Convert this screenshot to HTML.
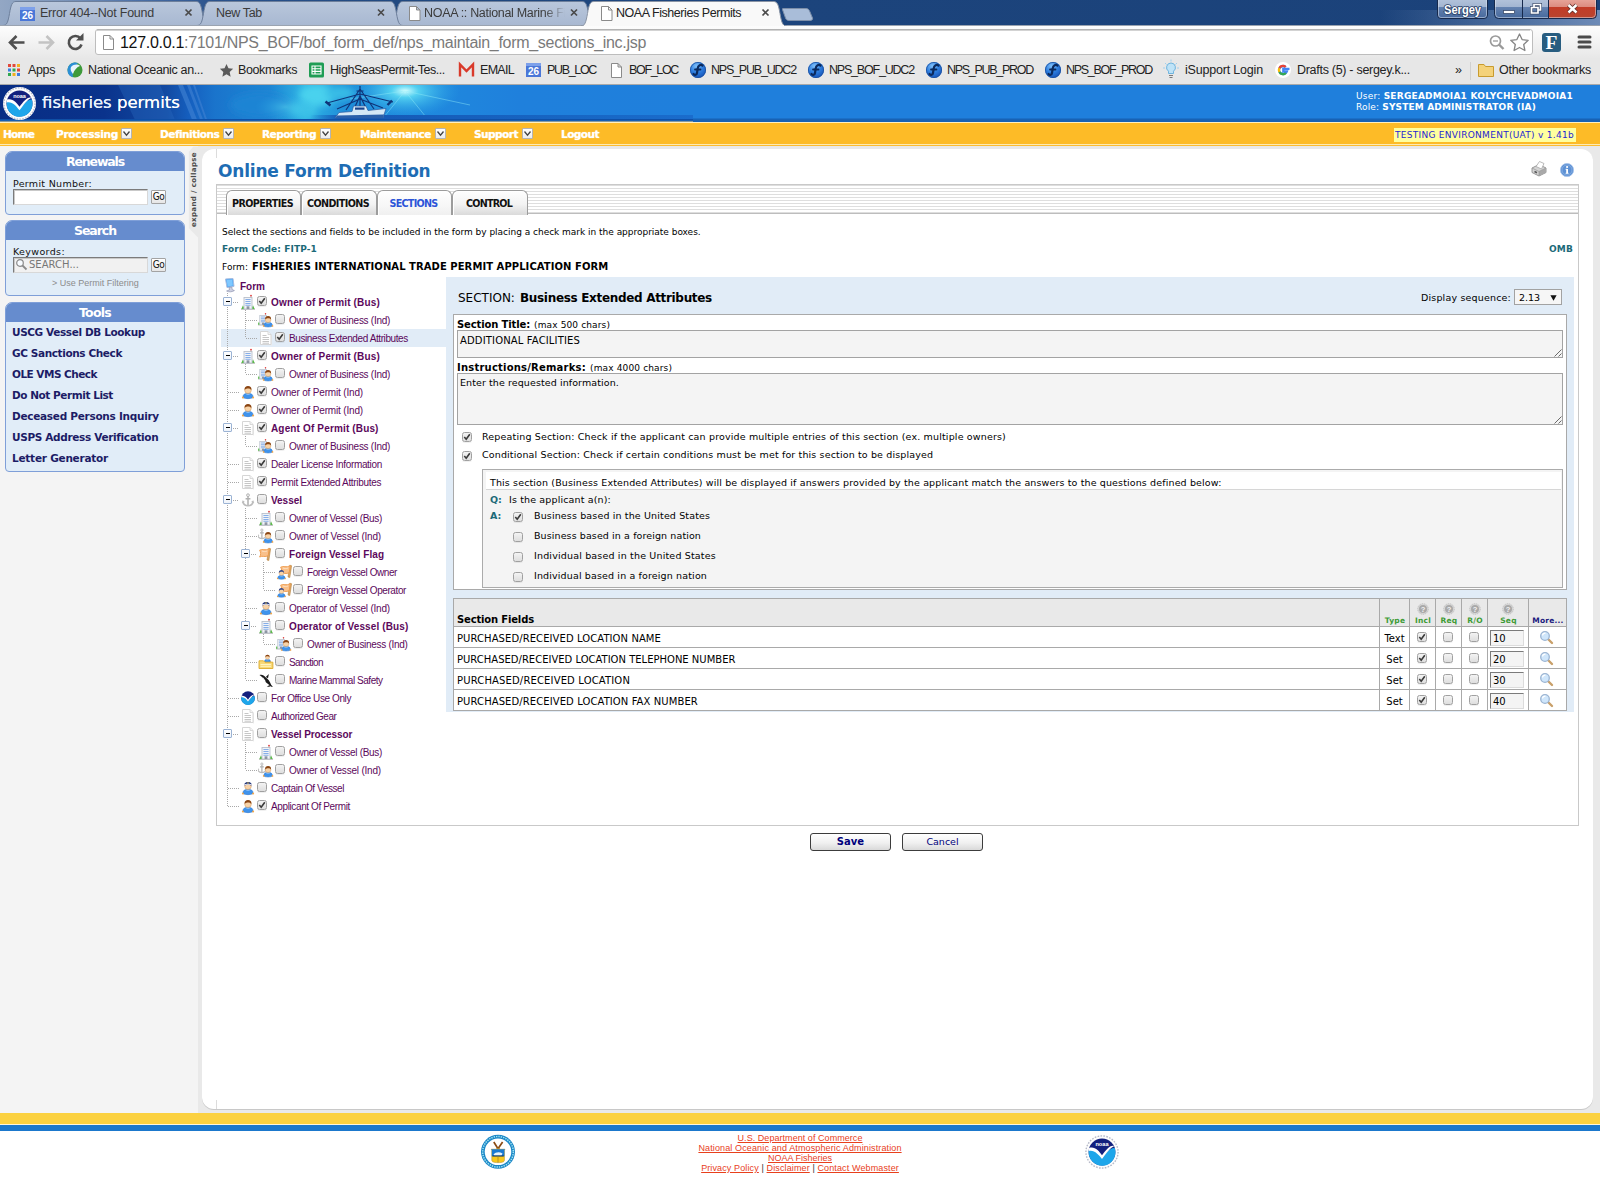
<!DOCTYPE html>
<html lang="en"><head>
<meta charset="utf-8">
<title>NOAA Fisheries Permits</title>
<style>
*{box-sizing:border-box;margin:0;padding:0}
html,body{width:1600px;height:1200px;overflow:hidden;background:#fff}
body{position:relative;font-family:"DejaVu Sans","Liberation Sans",sans-serif;font-size:10px;color:#000}
.abs{position:absolute}
a{text-decoration:none;color:inherit}
/* ---------- chrome frame ---------- */
#titlebar{left:0;top:0;width:1600px;height:26px;background:linear-gradient(90deg,#93a7c4 0px,#7d96bb 60px,#4a6fa6 140px,#2a528c 215px,#20487f 420px,#1c447c 780px,#1b427a 1600px)}
#toolbar{left:0;top:25px;width:1600px;height:34px;background:linear-gradient(#fdfdfd,#f0f0f0 60%,#e7e7e7);border-top:1px solid #b9bec6}
#bookbar{left:0;top:58px;width:1600px;height:27px;background:#e7e7e7;border-bottom:1px solid #a9a9a9}
.ctab{top:1px;height:25px;font-family:"Liberation Sans",sans-serif;font-size:12.5px;color:#3b3b3b;white-space:nowrap;overflow:hidden}
.ctab svg{position:absolute;left:0;top:0}
.ctab span{position:absolute;top:5px}
.bm{top:62px;font-family:"Liberation Sans",sans-serif;font-size:12.5px;color:#222;white-space:nowrap;line-height:16px}
#url{left:120px;top:33px;font-family:"Liberation Sans",sans-serif;font-size:16px;color:#7a7a7a;white-space:nowrap;line-height:20px;letter-spacing:-0.15px}
#url b{font-weight:normal;color:#111}
/* ---------- site header ---------- */
#banner{left:0;top:85px;width:1600px;height:37px;background:#1f7fdc;overflow:hidden}
#menubar{left:0;top:121.500px;width:1600px;height:24.500px;background:linear-gradient(#fff0c0 0,#fff0c0 1px,#fdbb27 1px,#fdbb27 21.500px,#fdebb4 21.500px,#fdebb4 23px,#fcbc30 23px,#fcbc30 24.500px)}
.mi{top:127.500px;font-weight:bold;font-size:10.5px;color:#fff;white-space:nowrap;line-height:13px;text-shadow:0 0 1px #fff6dc}
.mbox{top:128px;width:11px;height:11px;border:1px solid #b4b4b4;background:linear-gradient(#fff,#ececec);border-radius:1px}
/* ---------- page ---------- */
#leftcol{left:0;top:146px;width:198px;height:967px;background:#f4f4f4}
#rightcol{left:198px;top:146px;width:1402px;height:967px;background:#e9e9e9}
#panel{left:202px;top:149px;width:1391px;height:960px;background:#fff;border-radius:12px;box-shadow:0 1px 0 #c8c8c8}
.sb{left:5px;width:180px;background:#e1edf8;border:1px solid #7f9fd8;border-radius:7px 7px 4px 4px;overflow:hidden}
.sb h3{height:19px;background:#668cce;color:#fff;font-size:12.5px;line-height:19px;text-align:center;font-weight:bold}
.tool{left:12px;font-weight:bold;font-size:10.5px;color:#1c1c66;white-space:nowrap;line-height:13px}

.sbl{left:13px;font-size:9.5px;line-height:12px;white-space:nowrap;color:#111}
.inp{left:13px;width:135px;height:16px;border:1px solid;border-color:#7b7b7b #d8d8d8 #d8d8d8 #7b7b7b;background:#fff;box-shadow:inset 1px 1px 0 #c9c9c9}
.go{left:151px;width:15px;height:13.500px;border:1px solid #a3a3a3;border-radius:1px;background:linear-gradient(#fff,#e6e6e6);font-family:"DejaVu Sans Condensed","Liberation Sans",sans-serif;font-size:10px;line-height:11.500px;text-align:center;color:#111;letter-spacing:-.4px}
/*MAINCSS*/
.t9{font-size:9px;line-height:11px;white-space:nowrap;margin-top:1px}
.t10{font-size:10px;line-height:12px;white-space:nowrap;margin-top:1px}
.teal{color:#1c6a78;font-weight:bold}
.tl{font-family:"Liberation Sans",sans-serif;font-size:10px;line-height:12px;color:#5c085c;white-space:nowrap}
.tl b{font-weight:bold}
.cb{width:10px;height:10px;border:1px solid #a0a0a0;border-radius:2.5px;background:linear-gradient(#f3f3f3,#dedede);box-shadow:0 1px 0 rgba(0,0,0,.06)}
.cb svg{display:block}
.exp{width:9px;height:9px;border:1px solid #9bb3d4;background:#fff;border-radius:1px}
.exp{background:linear-gradient(#fff,#eef3fa)}
.exp i{position:absolute;left:1.500px;top:2.800px;width:4px;height:1.400px;background:#000}
.dh{height:1px;background:repeating-linear-gradient(90deg,#a8a8a8 0,#a8a8a8 1px,transparent 1px,transparent 2px)}
.dv{width:1px;background:repeating-linear-gradient(#a8a8a8 0,#a8a8a8 1px,transparent 1px,transparent 2px)}
.ta{background:#f4f4f4;border:1px solid #a3a3a3}
.tab{top:190px;height:25px;border:1px solid #9c9c9c;border-bottom:0;border-radius:6px 6px 0 0;background:linear-gradient(#fefefe 0,#f3f3f3 55%,#dadada 100%);font-size:9.600px;font-weight:bold;line-height:25px;text-align:center;color:#111;padding-right:2px;white-space:nowrap;box-shadow:inset 1px 1px 0 #fff}
.hd{font-size:7.500px;font-weight:bold;color:#3d9b35;line-height:10px;letter-spacing:.2px;text-align:center;white-space:nowrap}
.btn{top:833px;width:81px;height:18px;border:1px solid #3c3c3c;border-radius:3px;background:linear-gradient(#fff,#f0f0f0 55%,#d9d9d9);text-align:center;line-height:16px;font-size:10px;color:#00007c}
.fl{left:0;width:1600px;text-align:center;font-family:"Liberation Sans",sans-serif;font-size:9px;line-height:10px;color:#e8401c;white-space:nowrap}
.fl u{text-decoration:underline}
/*/MAINCSS*/
</style>
</head>
<body>
<!-- CHROME -->
<div id="titlebar" class="abs"></div>
<div id="toolbar" class="abs"></div>
<div id="bookbar" class="abs"></div>

<!-- tabs -->
<svg class="abs" style="left:0;top:0" width="1600" height="26" viewBox="0 0 1600 26">
  <defs>
    <linearGradient id="tg" x1="0" y1="0" x2="0" y2="1"><stop offset="0" stop-color="#b9c7dc"></stop><stop offset="1" stop-color="#a8b8d1"></stop></linearGradient>
  </defs>
  <path d="M3 25.5 C7 25.5 8 22 9.5 13.5 C11 5 12 1.5 16 1.5 H196 C200 1.5 201 5 202.5 13.5 C204 22 205 25.5 209 25.5 Z" fill="url(#tg)" stroke="#6d7f9b" stroke-width="1"></path>
  <path d="M390 25.5 C394 25.5 395 22 396.5 13.5 C398 5 399 1.5 403 1.5 H582 C586 1.5 587 5 588.5 13.5 C590 22 591 25.5 595 25.5 Z" fill="url(#tg)" stroke="#6d7f9b" stroke-width="1"></path>
  <path d="M197 25.5 C201 25.5 202 22 203.5 13.5 C205 5 206 1.5 210 1.5 H390 C394 1.5 395 5 396.5 13.5 C398 22 399 25.5 403 25.5 Z" fill="url(#tg)" stroke="#6d7f9b" stroke-width="1"></path>
  <path d="M0 25.5 H1600" stroke="#9aa3b0" stroke-width="1"></path>
  <path d="M581 26 C585 26 586 22 587.5 13.5 C589 5 590 1.5 594 1.5 H773.5 C777.5 1.5 778.5 5 780.0 13.5 C781.5 22 782.5 26 786.5 26 Z" fill="#f9f9f9" stroke="#8a94a4" stroke-width="1"></path>
  <path d="M584 25.700 H784" stroke="#f9f9f9" stroke-width="1.600"></path>
  <path d="M783 8.5 H806 C808 8.5 809 9.5 810 12 L812.500 18 C813 19.500 812 20.500 810 20.500 H789 C787 20.500 786 19.500 785.500 18 L783 11 C782.500 9.500 782 8.500 783 8.500 Z" fill="#a9bdd9" stroke="#7d8fa9" stroke-width="1"></path>
  <!-- favicons -->
  <rect x="20" y="7" width="15" height="14" fill="#4a77d8"></rect><rect x="20" y="7" width="15" height="3" fill="#7da0ea"></rect>
  <text x="27.5" y="19" font-family="Liberation Sans, sans-serif" font-size="10" font-weight="bold" fill="#fff" text-anchor="middle">26</text>
  <path d="M409.500 6.500 h7 l3.500 3.500 v10.500 h-10.500 z M416.500 6.500 v3.500 h3.500" fill="#fff" stroke="#8a8a8a" stroke-width="1"></path>
  <path d="M601.500 6.500 h7 l3.500 3.500 v10.500 h-10.500 z M608.500 6.500 v3.500 h3.500" fill="#fff" stroke="#8a8a8a" stroke-width="1"></path>
  <!-- close x -->
  <g stroke="#4a4a4a" stroke-width="1.7" stroke-linecap="butt">
    <path d="M185.500 9.500 l6 6 m0 -6 l-6 6"></path><path d="M378 9.500 l6 6 m0 -6 l-6 6"></path><path d="M571 9.500 l6 6 m0 -6 l-6 6"></path><path d="M762.500 9.500 l6 6 m0 -6 l-6 6"></path>
  </g>
  <!-- user + window buttons -->
  <defs>
    <linearGradient id="wb" x1="0" y1="0" x2="0" y2="1"><stop offset="0" stop-color="#b9c8de"></stop><stop offset=".48" stop-color="#a3b6d2"></stop><stop offset=".5" stop-color="#6482b0"></stop><stop offset="1" stop-color="#46689c"></stop></linearGradient>
    <linearGradient id="wc" x1="0" y1="0" x2="0" y2="1"><stop offset="0" stop-color="#ecb0a6"></stop><stop offset=".48" stop-color="#dc8c80"></stop><stop offset=".5" stop-color="#c23c28"></stop><stop offset="1" stop-color="#b8442e"></stop></linearGradient>
    <linearGradient id="glow" x1="0" y1="0" x2="1" y2="0"><stop offset="0" stop-color="#7c98c2" stop-opacity="0"></stop><stop offset="1" stop-color="#7c98c2" stop-opacity=".85"></stop></linearGradient>
  </defs>
  <rect x="1380" y="10" width="220" height="15" fill="url(#glow)"></rect>
  <rect x="1437.500" y="-4" width="50" height="22.500" rx="3.500" fill="url(#wb)" stroke="#16294c"></rect>
  <rect x="1438.500" y="-3" width="48" height="20.500" rx="2.500" fill="none" stroke="#d4deee" stroke-width=".7" opacity=".8"></rect>
  <text x="1462.500" y="13.500" font-family="Liberation Sans, sans-serif" font-size="12" font-weight="bold" fill="#fff" stroke="#2a3f66" stroke-width="1.600" paint-order="stroke" text-anchor="middle" textLength="37" lengthAdjust="spacingAndGlyphs">Sergey</text>
  <path d="M1494.500 -4 H1548.500 V18.500 H1498.500 Q1494.500 18.500 1494.500 14.500Z" fill="url(#wb)" stroke="#16294c"></path>
  <path d="M1548.500 -4 H1596.500 V14.500 Q1596.500 18.500 1592.500 18.500 H1548.500 Z" fill="url(#wc)" stroke="#16294c"></path>
  <path d="M1495.500 -3 H1595.500 V14 Q1595.500 17.500 1592 17.500 H1499 Q1495.500 17.500 1495.500 14Z" fill="none" stroke="#e4eaf4" stroke-width=".7" opacity=".7"></path>
  <path d="M1522.500 0 V18 M1548.500 0 V18" stroke="#16294c"></path>
  <rect x="1503.500" y="10.500" width="11" height="3" fill="#fff" stroke="#3c4d6c" stroke-width=".8"></rect>
  <path d="M1531.500 7.500 h6.500 v5.500 h-6.500 z M1534 7 v-2.500 h6.500 v5.500 h-2.300" fill="none" stroke="#3c4d6c" stroke-width="3"></path>
  <path d="M1531.500 7.500 h6.500 v5.500 h-6.500 z M1534 7 v-2.500 h6.500 v5.500 h-2.300" fill="none" stroke="#fff" stroke-width="1.700"></path>
  <path d="M1568.500 5 l8 7.500 m0 -7.500 l-8 7.500" stroke="#5a2a24" stroke-width="4"></path>
  <path d="M1568.500 5 l8 7.500 m0 -7.500 l-8 7.500" stroke="#fff" stroke-width="2.500"></path>
</svg>
<div class="abs ctab" style="left:40px;width:140px"><span style="letter-spacing: -0.24px;">Error 404--Not Found</span></div>
<div class="abs ctab" style="left:216px;width:150px"><span style="letter-spacing: -0.35px;">New Tab</span></div>
<div class="abs ctab" style="left:424px;width:143px;-webkit-mask-image:linear-gradient(90deg,#000 120px,transparent 141px)"><span style="letter-spacing: -0.31px;">NOAA :: National Marine Fi</span></div>
<div class="abs ctab" style="left:616px;width:140px;color:#222"><span style="letter-spacing: -0.44px;">NOAA Fisheries Permits</span></div>
<!-- toolbar -->
<svg class="abs" style="left:0;top:26px" width="1600" height="33" viewBox="0 26 1600 33">
  <rect x="95.500" y="29.500" width="1437" height="25" rx="2.500" fill="#fff" stroke="#bdbdbd"></rect>
  <path d="M97 30 H1530" stroke="#a8a8a8" stroke-width="1"></path>
  <g fill="none" stroke="#4f4f4f" stroke-width="2.600" stroke-linejoin="miter">
    <path d="M24.500 42.500 H10.500 M16.500 36 L10 42.500 L16.500 49"></path>
  </g>
  <g fill="none" stroke="#c3c3c3" stroke-width="2.600">
    <path d="M38.500 42.500 H52.500 M46.500 36 L53 42.500 L46.500 49"></path>
  </g>
  <path d="M80.500 38.500 A6.500 6.500 0 1 0 81.500 44.500" fill="none" stroke="#4f4f4f" stroke-width="2.600"></path>
  <path d="M76 40.500 h7.500 v-7.500 z" fill="#4f4f4f"></path>
  <path d="M103.500 35.500 h6.500 l3.500 3.500 v10.500 h-10 z M110 35.500 v3.500 h3.500" fill="#fff" stroke="#8a8a8a" stroke-width="1"></path>
  <circle cx="1495.500" cy="41" r="5" fill="none" stroke="#9a9a9a" stroke-width="1.700"></circle><path d="M1499 44.500 l4.500 4.500" stroke="#9a9a9a" stroke-width="2.400"></path><path d="M1493 41 h5" stroke="#9a9a9a" stroke-width="1.300"></path>
  <path d="M1519.500 34 l2.600 5.600 6.100 .7 -4.500 4.200 1.200 6 -5.400 -3 -5.400 3 1.200 -6 -4.500 -4.200 6.100 -.7 z" fill="#fff" stroke="#858585" stroke-width="1.300" stroke-linejoin="round"></path>
  <rect x="1542" y="33" width="19" height="19" rx="3" fill="#285d80"></rect>
  <text x="1551.500" y="49.300" font-family="Liberation Serif, serif" font-size="19.500" font-weight="bold" fill="#fff" text-anchor="middle">F</text>
  <path d="M1579 37 h11 M1579 42 h11 M1579 47 h11" stroke="#4a4a4a" stroke-width="3" stroke-linecap="round"></path>
</svg>
<div id="url" class="abs"><span style="letter-spacing: -0.3px;"><b>127.0.0.1</b>:7101/NPS_BOF/bof_form_def/nps_maintain_form_sections_inc.jsp</span></div>

<svg class="abs" style="left:0;top:59px" width="1600" height="26" viewBox="0 59 1600 26"><defs><radialGradient id="sph" cx=".4" cy=".25" r=".8"><stop offset="0" stop-color="#7fc0fa"></stop><stop offset=".5" stop-color="#2f7fe0"></stop><stop offset="1" stop-color="#1450b4"></stop></radialGradient></defs>
  <g>
   <rect x="8" y="64" width="3" height="3" fill="#e2483a"></rect><rect x="12.500" y="64" width="3" height="3" fill="#e2483a"></rect><rect x="17" y="64" width="3" height="3" fill="#f2b01e"></rect>
   <rect x="8" y="68.500" width="3" height="3" fill="#3a7de2"></rect><rect x="12.500" y="68.500" width="3" height="3" fill="#2fa84f"></rect><rect x="17" y="68.500" width="3" height="3" fill="#e2483a"></rect>
   <rect x="8" y="73" width="3" height="3" fill="#2fa84f"></rect><rect x="12.500" y="73" width="3" height="3" fill="#f2b01e"></rect><rect x="17" y="73" width="3" height="3" fill="#3a7de2"></rect>
  </g>
  <g transform="translate(75,70)"><circle r="7.500" fill="#3e9a3a"></circle><path d="M-7.500 0 A7.500 7.500 0 0 1 3 -6.900 C-1 -3 -3 2 -2 7.200 A7.500 7.500 0 0 1 -7.500 0 Z" fill="#2c8fd6"></path><path d="M-4 -3 C-1 -6 3 -6 5 -4 C2 -3 -1 0 -2 4 C-4 2 -5 -1 -4 -3 Z" fill="#e9f4fb"></path></g>
  <path transform="translate(226.500,70.500) scale(.86) translate(-226,-70.500)" d="M226 63 l2.300 5 5.400 .6 -4 3.700 1.100 5.400 -4.800 -2.700 -4.800 2.700 1.100 -5.400 -4 -3.700 5.400 -.6 z" fill="#5a5a5a"></path>
  <rect x="309" y="62.500" width="15" height="15" rx="1.500" fill="#1f9d55"></rect><path d="M312 66 h9 v8 h-9 z M312 68.700 h9 M312 71.400 h9 M315 66 v8" fill="none" stroke="#fff" stroke-width="1.100"></path>
  <path d="M460 76.500 V64.500 L466.500 71 L473 64.500 V76.500" fill="none" stroke="#d93a2b" stroke-width="2.400" stroke-linejoin="miter"></path>
  <rect x="526" y="63" width="15" height="14" fill="#4a77d8"></rect><rect x="526" y="63" width="15" height="3" fill="#7da0ea"></rect>
  <text x="533.500" y="75" font-family="Liberation Sans, sans-serif" font-size="10" font-weight="bold" fill="#fff" text-anchor="middle">26</text>
  <path d="M611.500 63.500 h6.500 l3.500 3.500 v10.500 h-10 z M618 63.500 v3.500 h3.500" fill="#fff" stroke="#8a8a8a" stroke-width="1"></path>
  <g transform="translate(698,70)"><circle r="8" fill="url(#sph)"></circle><circle r="7.600" fill="none" stroke="#1a4f9e" stroke-width=".8"></circle><path d="M4.500 -4.500 C2.500 -6 0 -4.500 -0.300 -1.500 L-1 3 C-1.300 5 -3 5.500 -4.500 4" fill="none" stroke="#0b2a5e" stroke-width="2.200" stroke-linecap="round"></path><path d="M-3 -0.500 H2.500" stroke="#0b2a5e" stroke-width="1.800" stroke-linecap="round"></path></g><g transform="translate(816,70)"><circle r="8" fill="url(#sph)"></circle><circle r="7.600" fill="none" stroke="#1a4f9e" stroke-width=".8"></circle><path d="M4.500 -4.500 C2.500 -6 0 -4.500 -0.300 -1.500 L-1 3 C-1.300 5 -3 5.500 -4.500 4" fill="none" stroke="#0b2a5e" stroke-width="2.200" stroke-linecap="round"></path><path d="M-3 -0.500 H2.500" stroke="#0b2a5e" stroke-width="1.800" stroke-linecap="round"></path></g><g transform="translate(934,70)"><circle r="8" fill="url(#sph)"></circle><circle r="7.600" fill="none" stroke="#1a4f9e" stroke-width=".8"></circle><path d="M4.500 -4.500 C2.500 -6 0 -4.500 -0.300 -1.500 L-1 3 C-1.300 5 -3 5.500 -4.500 4" fill="none" stroke="#0b2a5e" stroke-width="2.200" stroke-linecap="round"></path><path d="M-3 -0.500 H2.500" stroke="#0b2a5e" stroke-width="1.800" stroke-linecap="round"></path></g><g transform="translate(1053,70)"><circle r="8" fill="url(#sph)"></circle><circle r="7.600" fill="none" stroke="#1a4f9e" stroke-width=".8"></circle><path d="M4.500 -4.500 C2.500 -6 0 -4.500 -0.300 -1.500 L-1 3 C-1.300 5 -3 5.500 -4.500 4" fill="none" stroke="#0b2a5e" stroke-width="2.200" stroke-linecap="round"></path><path d="M-3 -0.500 H2.500" stroke="#0b2a5e" stroke-width="1.800" stroke-linecap="round"></path></g>
  <g transform="translate(1171,69)"><path d="M0 -6 a4.500 4.500 0 0 1 2.500 8.200 v2.300 h-5 v-2.300 a4.500 4.500 0 0 1 2.500 -8.200z" fill="#bfe3f7" stroke="#6fb4de" stroke-width="1"></path><path d="M-2 6.500 h4 M-1.500 8.500 h3" stroke="#7a7a7a" stroke-width="1.200"></path><path d="M0 -9.500 v2 M-6 -6 l1.500 1.500 M6 -6 l-1.500 1.500 M-8 -1 h2 M8 -1 h-2" stroke="#9fd0ee" stroke-width="1"></path></g>
  <g transform="translate(1283,70)"><circle r="8" fill="#fff"></circle><path d="M6.500 -1.200 H0.300 V1.500 H3.800 A4 4 0 1 1 2.700 -3" fill="none" stroke="#4285f4" stroke-width="2.300"></path><path d="M-3.600 -2 A4 4 0 0 1 2.700 -3" fill="none" stroke="#ea4335" stroke-width="2.300"></path><path d="M-3.600 2 A4 4 0 0 1 -3.600 -2" fill="none" stroke="#fbbc05" stroke-width="2.300"></path><path d="M2.900 3 A4 4 0 0 1 -3.600 2" fill="none" stroke="#34a853" stroke-width="2.300"></path></g>
  <path d="M1470.500 62 V80" stroke="#d0d0d0"></path><path d="M1478.500 76.500 V64.500 H1484 L1485.500 66.500 H1493.500 V76.500 Z" fill="#f4d27a" stroke="#c89b2e" stroke-width="1"></path>
</svg>
<div class="abs bm" style="left:28px"><span style="letter-spacing: -0.37px;">Apps</span></div>
<div class="abs bm" style="left:88px"><span style="letter-spacing: -0.36px;">National Oceanic an...</span></div>
<div class="abs bm" style="left:238px"><span style="letter-spacing: -0.39px;">Bookmarks</span></div>
<div class="abs bm" style="left:330px"><span style="letter-spacing: -0.45px;">HighSeasPermit-Tes...</span></div>
<div class="abs bm" style="left:480px"><span style="letter-spacing: -0.7px;">EMAIL</span></div>
<div class="abs bm" style="left:547px"><span style="letter-spacing: -1.34px;">PUB_LOC</span></div>
<div class="abs bm" style="left:629px"><span style="letter-spacing: -1.34px;">BOF_LOC</span></div>
<div class="abs bm" style="left:711px"><span style="letter-spacing: -1.2px;">NPS_PUB_UDC2</span></div>
<div class="abs bm" style="left:829px"><span style="letter-spacing: -1.2px;">NPS_BOF_UDC2</span></div>
<div class="abs bm" style="left:947px"><span style="letter-spacing: -1.29px;">NPS_PUB_PROD</span></div>
<div class="abs bm" style="left:1066px"><span style="letter-spacing: -1.29px;">NPS_BOF_PROD</span></div>
<div class="abs bm" style="left:1185px"><span style="letter-spacing: -0.19px;">iSupport Login</span></div>
<div class="abs bm" style="left:1297px"><span style="letter-spacing: -0.29px;">Drafts (5) - sergey.k...</span></div>
<div class="abs bm" style="left:1455px"><span style="letter-spacing: 0.05px;">»</span></div>
<div class="abs bm" style="left:1499px"><span style="letter-spacing: -0.26px;">Other bookmarks</span></div>

<!-- SITE -->

<svg class="abs" style="left:0;top:85px" width="1600" height="37" viewBox="0 0 1600 37">
  <defs>
    <linearGradient id="bg1" x1="0" y1="0" x2="1" y2="0">
      <stop offset="0" stop-color="#082d84"></stop><stop offset=".15" stop-color="#0a338c"></stop><stop offset=".24" stop-color="#124aa2"></stop><stop offset=".275" stop-color="#1560c0"></stop><stop offset=".31" stop-color="#1a74cc"></stop><stop offset=".39" stop-color="#1e86d4"></stop><stop offset=".44" stop-color="#2fb4e4"></stop><stop offset=".5" stop-color="#1e8cd8"></stop><stop offset=".6" stop-color="#1f8ade"></stop><stop offset=".75" stop-color="#1f80dc"></stop><stop offset="1" stop-color="#1f7fdc"></stop>
    </linearGradient>
    <radialGradient id="sun" cx="0.5" cy="0.5" r="0.5"><stop offset="0" stop-color="#d8ffff"></stop><stop offset=".25" stop-color="#5fe0f5" stop-opacity=".8"></stop><stop offset="1" stop-color="#2aa6e6" stop-opacity="0"></stop></radialGradient>
    <radialGradient id="cl" cx="0.5" cy="0.5" r="0.5"><stop offset="0" stop-color="#55d6ee" stop-opacity=".9"></stop><stop offset="1" stop-color="#2aa6e6" stop-opacity="0"></stop></radialGradient>
    <filter id="bl" x="-30%" y="-60%" width="160%" height="220%"><feGaussianBlur stdDeviation="3.500"></feGaussianBlur></filter>
    <linearGradient id="sea" x1="0" y1="0" x2="1" y2="0"><stop offset="0" stop-color="#1558b5" stop-opacity="0"></stop><stop offset=".08" stop-color="#1558b5"></stop><stop offset=".7" stop-color="#1766c4"></stop><stop offset="1" stop-color="#1a6ccc"></stop></linearGradient>
  </defs>
  <rect width="1600" height="37" fill="#1f7fdc"></rect>
  <rect width="693" height="37" fill="url(#bg1)"></rect>
  <path d="M118 0 L136 37 H176 L160 0Z" fill="#2a6cc4" opacity=".35"></path><path d="M178 0 L193 37 h5 L183 0z M187 0 L201 37 h3 L190 0z M193 0 L206 37 h2 L195 0z" fill="#3b7ed0" opacity=".7"></path>
  <g filter="url(#bl)"><ellipse cx="318" cy="10" rx="19" ry="11" fill="#4ad2ee"></ellipse><ellipse cx="304" cy="25" rx="13" ry="8" fill="#3cc4e8"></ellipse><ellipse cx="340" cy="8" rx="15" ry="7" fill="#38bce6"></ellipse><ellipse cx="260" cy="20" rx="30" ry="12" fill="#1e84d4"></ellipse></g>
  <ellipse cx="285" cy="22" rx="30" ry="14" fill="url(#cl)" opacity=".6"></ellipse>
  <ellipse cx="405" cy="6" rx="55" ry="26" fill="url(#sun)"></ellipse>
  <path d="M405 6 L380 37 M405 6 L430 37 M405 6 L470 20 M405 6 L350 14" stroke="#8feaf7" stroke-width="1" opacity=".45"></path>
  <rect x="310" y="30" width="383" height="5" fill="url(#sea)"></rect>
  <!-- ship -->
  <g fill="none" stroke="#0f3478" stroke-width="1.200">
    <path d="M360 24 V1 M356.500 6 h7 M360 4 L346 25 M360 4 L374 24 M360 9 L327 18 M360 9 L393 17 M353 26 L360 11 L367 25 M360 14 L337 24 M360 14 L383 23"></path>
    <path d="M325.500 16.500 l5 4 M392 15.500 l-4.500 4.500" stroke-width="2.400"></path>
  </g>
  <path d="M335 33 L339 27.500 L352 26.500 L353.500 21 L366 21 L368 25.500 L386 23.500 L383 33 Z" fill="#d4e8f6" stroke="#2a5aa0" stroke-width=".7"></path>
  <path d="M355 22.500 h9.500 v2.200 h-9.500z" fill="#1a448c"></path>
  <path d="M337 30.500 L384 29.500 L383 33 H335.500Z" fill="#2a60aa"></path>
  <rect x="0" y="34" width="693" height="2" fill="#0f4fa6"></rect>
  <rect x="0" y="35" width="1600" height="2" fill="#155fb3"></rect><rect x="693" y="33.500" width="907" height="3.500" fill="#1862b4"></rect>
  <rect x="0" y="36.500" width="693" height="1" fill="#fbd98a"></rect>
  <!-- NOAA logo -->
  <g transform="translate(19.500,18.500)"><circle r="16.51" fill="#fdfdfd"></circle><circle r="15.60" fill="none" stroke="#b4b8c8" stroke-width="1.30" stroke-dasharray="1.56 1.30"></circle><circle r="13" fill="#13207e"></circle><path d="M-12.74 -1.95 C-7.8 -3.9 -3.25 1.3 0 5.46 C3.9 1.3 7.8 -4.55 12.35 -3.9 A13 13 0 1 1 -12.74 -1.95Z" fill="#1ea6ea"></path><path d="M-12.48 -3.9 C-7.15 -5.85 -2.6 -0.65 0 3.25 C3.9 -1.95 7.8 -7.15 11.96 -5.85 C7.8 -3.9 3.9 1.56 0 6.76 C-3.25 2.34 -7.8 -2.6 -12.87 -1.04Z" fill="#fff"></path><text x="0" y="-5.46" font-family="Liberation Sans, sans-serif" font-size="5.46" font-weight="bold" fill="#fff" text-anchor="middle">noaa</text></g>
</svg>
<div class="abs" style="left:42px;top:92px;font-size:16.500px;line-height:21px;color:#e8f1fb;white-space:nowrap;font-family:'DejaVu Sans','Liberation Sans',sans-serif"><span style=""><span style="text-shadow:0 0 .5px #fff">fisheries </span><span style="color:#fff;text-shadow:0 0 .6px #fff">permits</span></span></div>
<div class="abs" style="left:1356px;top:91px;font-size:9px;line-height:11px;color:#fff;white-space:nowrap"><span style="letter-spacing: 0.23px;">User: <b>SERGEADMOIA1 KOLYCHEVADMOIA1</b></span><br><span style="letter-spacing: 0.16px;">Role: <b>SYSTEM ADMINISTRATOR (IA)</b></span></div>

<div id="menubar" class="abs"></div>
<a class="abs mi" style="left:3px"><span style="letter-spacing: -0.77px;">Home</span></a>
<a class="abs mi" style="left:56px"><span style="letter-spacing: -0.25px;">Processing</span></a><div class="abs mbox" style="left:121px"><svg width="9" height="9" viewBox="0 0 9 9" style="display:block"><path d="M1.500 2.500 L4.500 6.200 L7.500 2.500" fill="none" stroke="#444" stroke-width="1.300"></path></svg></div>
<a class="abs mi" style="left:160px"><span style="letter-spacing: -0.48px;">Definitions</span></a><div class="abs mbox" style="left:223px"><svg width="9" height="9" viewBox="0 0 9 9" style="display:block"><path d="M1.500 2.500 L4.500 6.200 L7.500 2.500" fill="none" stroke="#444" stroke-width="1.300"></path></svg></div>
<a class="abs mi" style="left:262px"><span style="letter-spacing: -0.53px;">Reporting</span></a><div class="abs mbox" style="left:320px"><svg width="9" height="9" viewBox="0 0 9 9" style="display:block"><path d="M1.500 2.500 L4.500 6.200 L7.500 2.500" fill="none" stroke="#444" stroke-width="1.300"></path></svg></div>
<a class="abs mi" style="left:360px"><span style="letter-spacing: -0.47px;">Maintenance</span></a><div class="abs mbox" style="left:435px"><svg width="9" height="9" viewBox="0 0 9 9" style="display:block"><path d="M1.500 2.500 L4.500 6.200 L7.500 2.500" fill="none" stroke="#444" stroke-width="1.300"></path></svg></div>
<a class="abs mi" style="left:474px"><span style="letter-spacing: -0.5px;">Support</span></a><div class="abs mbox" style="left:522px"><svg width="9" height="9" viewBox="0 0 9 9" style="display:block"><path d="M1.500 2.500 L4.500 6.200 L7.500 2.500" fill="none" stroke="#444" stroke-width="1.300"></path></svg></div>
<a class="abs mi" style="left:561px"><span style="letter-spacing: -0.52px;">Logout</span></a>
<div class="abs" style="left:1394px;top:127.500px;width:182px;height:14px;background:#ffff9e;color:#1f1fd2;font-size:9px;line-height:15px;padding-left:1px;white-space:nowrap"><span style="letter-spacing: 0.28px;">TESTING ENVIRONMENT(UAT) v 1.41b</span></div>

<div id="leftcol" class="abs"></div>
<div id="rightcol" class="abs"></div>
<div id="panel" class="abs"></div>

<div class="abs sb" style="top:151px;height:64px"><h3><span style="letter-spacing: -1.15px;">Renewals</span></h3></div>
<div class="abs sbl" style="top:178px"><span style="letter-spacing: 0.3px;">Permit Number:</span></div>
<div class="abs inp" style="top:189px"></div>
<div class="abs go" style="top:190px">Go</div>
<div class="abs sb" style="top:220px;height:76px"><h3><span style="letter-spacing: -1.07px;">Search</span></h3></div>
<div class="abs sbl" style="top:246px"><span style="letter-spacing: 0.36px;">Keywords:</span></div>
<div class="abs inp" style="top:257px;background:#f1f1f1"><svg width="14" height="13" viewBox="0 0 14 13" style="position:absolute;left:1px;top:0"><circle cx="5" cy="5" r="3.300" fill="#f7fbff" stroke="#8a8a8a" stroke-width="1.200"></circle><path d="M7.500 7.500 L11.500 11.500" stroke="#8a8a8a" stroke-width="1.800"></path></svg><span style="position: absolute; left: 15px; top: 1px; font-size: 10px; line-height: 12px; color: rgb(119, 119, 119); letter-spacing: 0.02px;">SEARCH...</span></div>
<div class="abs go" style="top:258px">Go</div>
<div class="abs" style="left:52px;top:278px;font-family:'Liberation Sans',sans-serif;font-size:9px;line-height:11px;color:#8c8c8c;white-space:nowrap"><span style="">&gt; Use Permit Filtering</span></div>
<div class="abs sb" style="top:302px;height:170px"><h3><span style="letter-spacing: -0.76px;">Tools</span></h3></div>
<a class="abs tool" style="top:326px"><span style="letter-spacing: -0.39px;">USCG Vessel DB Lookup</span></a>
<a class="abs tool" style="top:347px"><span style="letter-spacing: -0.39px;">GC Sanctions Check</span></a>
<a class="abs tool" style="top:368px"><span style="letter-spacing: -0.52px;">OLE VMS Check</span></a>
<a class="abs tool" style="top:389px"><span style="letter-spacing: -0.45px;">Do Not Permit List</span></a>
<a class="abs tool" style="top:410px"><span style="letter-spacing: -0.28px;">Deceased Persons Inquiry</span></a>
<a class="abs tool" style="top:431px"><span style="letter-spacing: -0.34px;">USPS Address Verification</span></a>
<a class="abs tool" style="top:452px"><span style="letter-spacing: -0.24px;">Letter Generator</span></a>
<svg class="abs" style="left:186px;top:146px" width="14" height="94" viewBox="186 146 14 94"><path d="M200 146.500 H193.500 L188.800 152 V228 L198 237.500 H200Z" fill="#e9e9e9"></path></svg>
<div class="abs" style="left:150px;top:184px;width:88px;height:11px;transform:rotate(-90deg);font-family:'DejaVu Sans','Liberation Sans',sans-serif;font-size:7px;font-weight:bold;line-height:11px;color:#4a4a4a;text-align:center;white-space:nowrap"><span style="letter-spacing:.36px">expand / collapse</span></div>

<!--MAIN-->
<div class="abs" style="left:218px;top:161px;font-size:17px;line-height:21px;font-weight:bold;color:#1e6db4;white-space:nowrap"><span style="letter-spacing: -0.2px;">Online Form Definition</span></div>
<svg class="abs" style="left:1530px;top:160px" width="18" height="18" viewBox="0 0 18 18"><path d="M2 8 L9 4.500 L16 8 V12.500 L9 16 L2 12.500Z" fill="#d4d4d4" stroke="#8e8e8e" stroke-width=".9"></path><path d="M9 11.500 L16 8 V12.500 L9 16Z" fill="#a9a9a9"></path><path d="M2 8 L9 11.500 L16 8 M9 11.500 V16" fill="none" stroke="#9c9c9c" stroke-width=".8"></path><path d="M6 6.500 L9.500 1.500 L14 3.500 L11.500 9Z" fill="#fff" stroke="#a8a8a8" stroke-width=".8"></path><path d="M4.500 11.500 l2.500 1.200" stroke="#555" stroke-width="1.500"></path></svg>
<svg class="abs" style="left:1559px;top:162px" width="16" height="16" viewBox="0 0 16 16"><circle cx="8" cy="8" r="6.600" fill="#5c90d4" stroke="#a8c4ea" stroke-width=".9"></circle><circle cx="8" cy="8" r="5" fill="none" stroke="#8db2e2" stroke-width=".8"></circle><rect x="7.200" y="7" width="1.800" height="4.300" fill="#fff"></rect><rect x="6.600" y="10.800" width="3" height=".9" fill="#fff"></rect><rect x="6.600" y="6.800" width="1.600" height=".9" fill="#fff"></rect><circle cx="8.100" cy="5" r="1.100" fill="#fff"></circle></svg>
<div class="abs" style="left:216px;top:184px;width:1363px;height:642px;border:1px solid #c9c9c9"></div><div class="abs" style="left:216px;top:149px;width:1px;height:9px;background:#dcdcdc"></div><div class="abs" style="left:216px;top:1100px;width:1px;height:9px;background:#dcdcdc"></div>
<div class="abs" style="left:217px;top:185px;width:1361px;height:29px;background:repeating-linear-gradient(#dedede 0,#dedede 1px,#fff 1px,#fff 3px);border-bottom:1px solid #bdbdbd"></div>
<div class="abs tab" style="left:226px;width:75px;"><span style="letter-spacing: -0.57px;">PROPERTIES</span></div><div class="abs tab" style="left:301px;width:76px;"><span style="letter-spacing: -0.6px;">CONDITIONS</span></div><div class="abs tab" style="left:377px;width:75px;color:#2c54d8;background:linear-gradient(#fff,#f7f7f7 60%,#f0f0f0);"><span style="letter-spacing: -0.71px;">SECTIONS</span></div><div class="abs tab" style="left:452px;width:76px;"><span style="letter-spacing: -0.78px;">CONTROL</span></div>
<div class="abs t9" style="left:222px;top:226px"><span style="letter-spacing: -0.02px;">Select the sections and fields to be included in the form by placing a check mark in the appropriate boxes.</span></div>
<div class="abs t9 teal" style="left:222px;top:243px"><span style="letter-spacing: 0.11px;">Form Code: FITP-1</span></div>
<div class="abs t9 teal" style="left:1549px;top:243px"><span style="letter-spacing: 0.18px;">OMB</span></div>
<div class="abs t9" style="left:222px;top:261px"><span style="letter-spacing: 0.06px;">Form:</span></div><div class="abs t10" style="left:252px;top:260px;font-weight:bold"><span style="letter-spacing: 0.06px;">FISHERIES INTERNATIONAL TRADE PERMIT APPLICATION FORM</span></div>
<div class="abs" style="left:221px;top:329px;width:225px;height:18px;background:#e1ecf7"></div>
<svg class="abs" style="left:222px;top:277px" width="16" height="16" viewBox="0 0 16 16"><path d="M3.500 2 L11 1.500 L12 9.300 L5 10.600Z" fill="#4aa4f2" stroke="#a8bce0" stroke-width="1"></path><path d="M4.600 3 L10.200 2.600 L10.900 8.500 L5.700 9.400Z" fill="#7fc8ff"></path><path d="M7.200 10.500 L9.800 10 L10.200 12.600 L12.400 13.500 C10.600 15 6.400 15.300 4.600 14 L7.400 13Z" fill="#cdd0e2" stroke="#9096b2" stroke-width=".7"></path></svg><div class="abs tl" style="left:240px;top:280.500px"><b style="">Form</b></div>
<div class="abs dh" style="left:233px;top:302px;width:6px"></div><svg class="abs" style="left:240px;top:294px" width="16" height="16" viewBox="0 0 16 16"><path d="M1 15.300 H15" stroke="#9a9a9a" stroke-width=".7"></path><path d="M1.300 15 L3 11.200 L4.700 15Z M11.300 15 L13 11.200 L14.700 15Z" fill="#5aba48"></path><rect x="4" y="3.500" width="8" height="11.500" fill="#f1f3f7" stroke="#b9c0cc" stroke-width=".9"></rect><path d="M5.400 5.500 h5.200 M5.400 7.500 h5.200 M5.400 9.500 h5.200 M5.400 11.300 h5.200" stroke="#86aee8" stroke-width="1.100"></path><rect x="6.600" y="12.300" width="2.800" height="2.700" fill="#8d95a3"></rect><path d="M11 3.500 V1.800" stroke="#b0b0b0" stroke-width=".8"></path><circle cx="11" cy="1.600" r=".9" fill="#e23a3a"></circle></svg><div class="abs cb" style="left:257px;top:296px"><svg width="8" height="8" viewBox="0 0 8 8"><path d="M1.300 4.100 L3.200 6.300 L6.800 1.200" fill="none" stroke="#3a3a3a" stroke-width="1.600"></path></svg></div><div class="abs tl" style="left:271px;top:297px"><b style="letter-spacing: 0.16px;">Owner of Permit (Bus)</b></div>
<div class="abs dh" style="left:246px;top:320px;width:11px"></div><svg class="abs" style="left:258px;top:312px" width="16" height="16" viewBox="0 0 16 16"><g transform="translate(-1.500,0.500) scale(.82)"><path d="M1 15.300 H15" stroke="#9a9a9a" stroke-width=".7"></path><path d="M1.300 15 L3 11.200 L4.700 15Z M11.300 15 L13 11.200 L14.700 15Z" fill="#5aba48"></path><rect x="4" y="3.500" width="8" height="11.500" fill="#f1f3f7" stroke="#b9c0cc" stroke-width=".9"></rect><path d="M5.400 5.500 h5.200 M5.400 7.500 h5.200 M5.400 9.500 h5.200 M5.400 11.300 h5.200" stroke="#86aee8" stroke-width="1.100"></path><rect x="6.600" y="12.300" width="2.800" height="2.700" fill="#8d95a3"></rect><path d="M11 3.500 V1.800" stroke="#b0b0b0" stroke-width=".8"></path><circle cx="11" cy="1.600" r=".9" fill="#e23a3a"></circle></g><g transform="translate(3.200,2.400) scale(.86)"><g transform="translate(0,0)"><path d="M3 13.600 C2.800 10.300 5 9.200 8 9.200 C11 9.200 13.200 10.300 13 13.600 C10.500 15 5.500 15 3 13.600Z" fill="#3f93ec" stroke="#2a74cc" stroke-width=".6"></path><path d="M5.500 9.600 C7 10.800 9 10.800 10.500 9.600" stroke="#9cc8f8" stroke-width=".8" fill="none"></path><circle cx="2.900" cy="13.400" r="1" fill="#f2a648"></circle><circle cx="13.100" cy="13.400" r="1" fill="#f2a648"></circle><circle cx="8" cy="6.200" r="3.300" fill="#f8d3a8" stroke="#cf9558" stroke-width=".5"></circle><path d="M4.600 6 C4.300 3 6 2 8 2 C10.200 2 11.700 3 11.400 6 C10.500 4.600 9 4.200 7.200 4.500 C6 4.700 5.100 5.200 4.600 6Z" fill="#8a4513"></path></g></g></svg><div class="abs cb" style="left:275px;top:314px"></div><div class="abs tl" style="left:289px;top:315px"><span style="letter-spacing: -0.27px;">Owner of Business (Ind)</span></div>
<div class="abs dh" style="left:246px;top:338px;width:11px"></div><svg class="abs" style="left:258px;top:330px" width="16" height="16" viewBox="0 0 16 16"><path d="M3.500 2.500 h7 l3 3 v10" fill="none" stroke="#ececec" stroke-width="1"></path><path d="M2.500 1.500 h7.500 l3 3 v10 h-10.500z" fill="#fff" stroke="#d6d6d6" stroke-width="1"></path><path d="M10 1.500 v3 h3" fill="#f4f4f4" stroke="#d2d2d2" stroke-width=".8"></path><path d="M4.500 5.500 h4 M4.500 7.500 h6.500 M4.500 9.500 h6.500 M4.500 11.500 h6.500 M4.500 13.200 h6.500" stroke="#c6c6c6" stroke-width="1"></path></svg><div class="abs cb" style="left:275px;top:332px"><svg width="8" height="8" viewBox="0 0 8 8"><path d="M1.300 4.100 L3.200 6.300 L6.800 1.200" fill="none" stroke="#3a3a3a" stroke-width="1.600"></path></svg></div><div class="abs tl" style="left:289px;top:333px"><span style="letter-spacing: -0.4px;">Business Extended Attributes</span></div>
<div class="abs dh" style="left:233px;top:356px;width:6px"></div><svg class="abs" style="left:240px;top:348px" width="16" height="16" viewBox="0 0 16 16"><path d="M1 15.300 H15" stroke="#9a9a9a" stroke-width=".7"></path><path d="M1.300 15 L3 11.200 L4.700 15Z M11.300 15 L13 11.200 L14.700 15Z" fill="#5aba48"></path><rect x="4" y="3.500" width="8" height="11.500" fill="#f1f3f7" stroke="#b9c0cc" stroke-width=".9"></rect><path d="M5.400 5.500 h5.200 M5.400 7.500 h5.200 M5.400 9.500 h5.200 M5.400 11.300 h5.200" stroke="#86aee8" stroke-width="1.100"></path><rect x="6.600" y="12.300" width="2.800" height="2.700" fill="#8d95a3"></rect><path d="M11 3.500 V1.800" stroke="#b0b0b0" stroke-width=".8"></path><circle cx="11" cy="1.600" r=".9" fill="#e23a3a"></circle></svg><div class="abs cb" style="left:257px;top:350px"><svg width="8" height="8" viewBox="0 0 8 8"><path d="M1.300 4.100 L3.200 6.300 L6.800 1.200" fill="none" stroke="#3a3a3a" stroke-width="1.600"></path></svg></div><div class="abs tl" style="left:271px;top:351px"><b style="letter-spacing: 0.16px;">Owner of Permit (Bus)</b></div>
<div class="abs dh" style="left:246px;top:374px;width:11px"></div><svg class="abs" style="left:258px;top:366px" width="16" height="16" viewBox="0 0 16 16"><g transform="translate(-1.500,0.500) scale(.82)"><path d="M1 15.300 H15" stroke="#9a9a9a" stroke-width=".7"></path><path d="M1.300 15 L3 11.200 L4.700 15Z M11.300 15 L13 11.200 L14.700 15Z" fill="#5aba48"></path><rect x="4" y="3.500" width="8" height="11.500" fill="#f1f3f7" stroke="#b9c0cc" stroke-width=".9"></rect><path d="M5.400 5.500 h5.200 M5.400 7.500 h5.200 M5.400 9.500 h5.200 M5.400 11.300 h5.200" stroke="#86aee8" stroke-width="1.100"></path><rect x="6.600" y="12.300" width="2.800" height="2.700" fill="#8d95a3"></rect><path d="M11 3.500 V1.800" stroke="#b0b0b0" stroke-width=".8"></path><circle cx="11" cy="1.600" r=".9" fill="#e23a3a"></circle></g><g transform="translate(3.200,2.400) scale(.86)"><g transform="translate(0,0)"><path d="M3 13.600 C2.800 10.300 5 9.200 8 9.200 C11 9.200 13.200 10.300 13 13.600 C10.500 15 5.500 15 3 13.600Z" fill="#3f93ec" stroke="#2a74cc" stroke-width=".6"></path><path d="M5.500 9.600 C7 10.800 9 10.800 10.500 9.600" stroke="#9cc8f8" stroke-width=".8" fill="none"></path><circle cx="2.900" cy="13.400" r="1" fill="#f2a648"></circle><circle cx="13.100" cy="13.400" r="1" fill="#f2a648"></circle><circle cx="8" cy="6.200" r="3.300" fill="#f8d3a8" stroke="#cf9558" stroke-width=".5"></circle><path d="M4.600 6 C4.300 3 6 2 8 2 C10.200 2 11.700 3 11.400 6 C10.500 4.600 9 4.200 7.200 4.500 C6 4.700 5.100 5.200 4.600 6Z" fill="#8a4513"></path></g></g></svg><div class="abs cb" style="left:275px;top:368px"></div><div class="abs tl" style="left:289px;top:369px"><span style="letter-spacing: -0.27px;">Owner of Business (Ind)</span></div>
<div class="abs dh" style="left:228px;top:392px;width:11px"></div><svg class="abs" style="left:240px;top:384px" width="16" height="16" viewBox="0 0 16 16"><g transform="translate(0,0)"><path d="M3 13.600 C2.800 10.300 5 9.200 8 9.200 C11 9.200 13.200 10.300 13 13.600 C10.500 15 5.500 15 3 13.600Z" fill="#3f93ec" stroke="#2a74cc" stroke-width=".6"></path><path d="M5.500 9.600 C7 10.800 9 10.800 10.500 9.600" stroke="#9cc8f8" stroke-width=".8" fill="none"></path><circle cx="2.900" cy="13.400" r="1" fill="#f2a648"></circle><circle cx="13.100" cy="13.400" r="1" fill="#f2a648"></circle><circle cx="8" cy="6.200" r="3.300" fill="#f8d3a8" stroke="#cf9558" stroke-width=".5"></circle><path d="M4.600 6 C4.300 3 6 2 8 2 C10.200 2 11.700 3 11.400 6 C10.500 4.600 9 4.200 7.200 4.500 C6 4.700 5.100 5.200 4.600 6Z" fill="#8a4513"></path></g></svg><div class="abs cb" style="left:257px;top:386px"><svg width="8" height="8" viewBox="0 0 8 8"><path d="M1.300 4.100 L3.200 6.300 L6.800 1.200" fill="none" stroke="#3a3a3a" stroke-width="1.600"></path></svg></div><div class="abs tl" style="left:271px;top:387px"><span style="letter-spacing: -0.17px;">Owner of Permit (Ind)</span></div>
<div class="abs dh" style="left:228px;top:410px;width:11px"></div><svg class="abs" style="left:240px;top:402px" width="16" height="16" viewBox="0 0 16 16"><g transform="translate(0,0)"><path d="M3 13.600 C2.800 10.300 5 9.200 8 9.200 C11 9.200 13.200 10.300 13 13.600 C10.500 15 5.500 15 3 13.600Z" fill="#3f93ec" stroke="#2a74cc" stroke-width=".6"></path><path d="M5.500 9.600 C7 10.800 9 10.800 10.500 9.600" stroke="#9cc8f8" stroke-width=".8" fill="none"></path><circle cx="2.900" cy="13.400" r="1" fill="#f2a648"></circle><circle cx="13.100" cy="13.400" r="1" fill="#f2a648"></circle><circle cx="8" cy="6.200" r="3.300" fill="#f8d3a8" stroke="#cf9558" stroke-width=".5"></circle><path d="M4.600 6 C4.300 3 6 2 8 2 C10.200 2 11.700 3 11.400 6 C10.500 4.600 9 4.200 7.200 4.500 C6 4.700 5.100 5.200 4.600 6Z" fill="#8a4513"></path></g></svg><div class="abs cb" style="left:257px;top:404px"><svg width="8" height="8" viewBox="0 0 8 8"><path d="M1.300 4.100 L3.200 6.300 L6.800 1.200" fill="none" stroke="#3a3a3a" stroke-width="1.600"></path></svg></div><div class="abs tl" style="left:271px;top:405px"><span style="letter-spacing: -0.17px;">Owner of Permit (Ind)</span></div>
<div class="abs dh" style="left:233px;top:428px;width:6px"></div><svg class="abs" style="left:240px;top:420px" width="16" height="16" viewBox="0 0 16 16"><path d="M3.500 2.500 h7 l3 3 v10" fill="none" stroke="#ececec" stroke-width="1"></path><path d="M2.500 1.500 h7.500 l3 3 v10 h-10.500z" fill="#fff" stroke="#d6d6d6" stroke-width="1"></path><path d="M10 1.500 v3 h3" fill="#f4f4f4" stroke="#d2d2d2" stroke-width=".8"></path><path d="M4.500 5.500 h4 M4.500 7.500 h6.500 M4.500 9.500 h6.500 M4.500 11.500 h6.500 M4.500 13.200 h6.500" stroke="#c6c6c6" stroke-width="1"></path></svg><div class="abs cb" style="left:257px;top:422px"><svg width="8" height="8" viewBox="0 0 8 8"><path d="M1.300 4.100 L3.200 6.300 L6.800 1.200" fill="none" stroke="#3a3a3a" stroke-width="1.600"></path></svg></div><div class="abs tl" style="left:271px;top:423px"><b style="letter-spacing: 0.15px;">Agent Of Permit (Bus)</b></div>
<div class="abs dh" style="left:246px;top:446px;width:11px"></div><svg class="abs" style="left:258px;top:438px" width="16" height="16" viewBox="0 0 16 16"><g transform="translate(-1.500,0.500) scale(.82)"><path d="M1 15.300 H15" stroke="#9a9a9a" stroke-width=".7"></path><path d="M1.300 15 L3 11.200 L4.700 15Z M11.300 15 L13 11.200 L14.700 15Z" fill="#5aba48"></path><rect x="4" y="3.500" width="8" height="11.500" fill="#f1f3f7" stroke="#b9c0cc" stroke-width=".9"></rect><path d="M5.400 5.500 h5.200 M5.400 7.500 h5.200 M5.400 9.500 h5.200 M5.400 11.300 h5.200" stroke="#86aee8" stroke-width="1.100"></path><rect x="6.600" y="12.300" width="2.800" height="2.700" fill="#8d95a3"></rect><path d="M11 3.500 V1.800" stroke="#b0b0b0" stroke-width=".8"></path><circle cx="11" cy="1.600" r=".9" fill="#e23a3a"></circle></g><g transform="translate(3.200,2.400) scale(.86)"><g transform="translate(0,0)"><path d="M3 13.600 C2.800 10.300 5 9.200 8 9.200 C11 9.200 13.200 10.300 13 13.600 C10.500 15 5.500 15 3 13.600Z" fill="#3f93ec" stroke="#2a74cc" stroke-width=".6"></path><path d="M5.500 9.600 C7 10.800 9 10.800 10.500 9.600" stroke="#9cc8f8" stroke-width=".8" fill="none"></path><circle cx="2.900" cy="13.400" r="1" fill="#f2a648"></circle><circle cx="13.100" cy="13.400" r="1" fill="#f2a648"></circle><circle cx="8" cy="6.200" r="3.300" fill="#f8d3a8" stroke="#cf9558" stroke-width=".5"></circle><path d="M4.600 6 C4.300 3 6 2 8 2 C10.200 2 11.700 3 11.400 6 C10.500 4.600 9 4.200 7.200 4.500 C6 4.700 5.100 5.200 4.600 6Z" fill="#8a4513"></path></g></g></svg><div class="abs cb" style="left:275px;top:440px"></div><div class="abs tl" style="left:289px;top:441px"><span style="letter-spacing: -0.27px;">Owner of Business (Ind)</span></div>
<div class="abs dh" style="left:228px;top:464px;width:11px"></div><svg class="abs" style="left:240px;top:456px" width="16" height="16" viewBox="0 0 16 16"><path d="M3.500 2.500 h7 l3 3 v10" fill="none" stroke="#ececec" stroke-width="1"></path><path d="M2.500 1.500 h7.500 l3 3 v10 h-10.500z" fill="#fff" stroke="#d6d6d6" stroke-width="1"></path><path d="M10 1.500 v3 h3" fill="#f4f4f4" stroke="#d2d2d2" stroke-width=".8"></path><path d="M4.500 5.500 h4 M4.500 7.500 h6.500 M4.500 9.500 h6.500 M4.500 11.500 h6.500 M4.500 13.200 h6.500" stroke="#c6c6c6" stroke-width="1"></path></svg><div class="abs cb" style="left:257px;top:458px"><svg width="8" height="8" viewBox="0 0 8 8"><path d="M1.300 4.100 L3.200 6.300 L6.800 1.200" fill="none" stroke="#3a3a3a" stroke-width="1.600"></path></svg></div><div class="abs tl" style="left:271px;top:459px"><span style="letter-spacing: -0.33px;">Dealer License Information</span></div>
<div class="abs dh" style="left:228px;top:482px;width:11px"></div><svg class="abs" style="left:240px;top:474px" width="16" height="16" viewBox="0 0 16 16"><path d="M3.500 2.500 h7 l3 3 v10" fill="none" stroke="#ececec" stroke-width="1"></path><path d="M2.500 1.500 h7.500 l3 3 v10 h-10.500z" fill="#fff" stroke="#d6d6d6" stroke-width="1"></path><path d="M10 1.500 v3 h3" fill="#f4f4f4" stroke="#d2d2d2" stroke-width=".8"></path><path d="M4.500 5.500 h4 M4.500 7.500 h6.500 M4.500 9.500 h6.500 M4.500 11.500 h6.500 M4.500 13.200 h6.500" stroke="#c6c6c6" stroke-width="1"></path></svg><div class="abs cb" style="left:257px;top:476px"><svg width="8" height="8" viewBox="0 0 8 8"><path d="M1.300 4.100 L3.200 6.300 L6.800 1.200" fill="none" stroke="#3a3a3a" stroke-width="1.600"></path></svg></div><div class="abs tl" style="left:271px;top:477px"><span style="letter-spacing: -0.32px;">Permit Extended Attributes</span></div>
<div class="abs dh" style="left:233px;top:500px;width:6px"></div><svg class="abs" style="left:240px;top:492px" width="16" height="16" viewBox="0 0 16 16"><circle cx="8" cy="3.200" r="1.400" fill="#f4f4f4" stroke="#b4b4b4" stroke-width="1"></circle><path d="M8 4.600 V13.500 M5.600 6.800 h4.800" stroke="#b0b0b0" stroke-width="1.500" fill="none"></path><path d="M2.800 9.800 C3.500 12.800 6 13.800 8 13.800 C10 13.800 12.500 12.800 13.200 9.800" fill="none" stroke="#bcbcbc" stroke-width="1.600"></path><path d="M1.800 11 l.9 -2.800 l2.200 1.900z M14.200 11 l-.9 -2.800 l-2.200 1.900z" fill="#bcbcbc"></path></svg><div class="abs cb" style="left:257px;top:494px"></div><div class="abs tl" style="left:271px;top:495px"><b style="letter-spacing: -0.03px;">Vessel</b></div>
<div class="abs dh" style="left:246px;top:518px;width:11px"></div><svg class="abs" style="left:258px;top:510px" width="16" height="16" viewBox="0 0 16 16"><path d="M1 15.300 H15" stroke="#9a9a9a" stroke-width=".7"></path><path d="M1.300 15 L3 11.200 L4.700 15Z M11.300 15 L13 11.200 L14.700 15Z" fill="#5aba48"></path><rect x="4" y="3.500" width="8" height="11.500" fill="#f1f3f7" stroke="#b9c0cc" stroke-width=".9"></rect><path d="M5.400 5.500 h5.200 M5.400 7.500 h5.200 M5.400 9.500 h5.200 M5.400 11.300 h5.200" stroke="#86aee8" stroke-width="1.100"></path><rect x="6.600" y="12.300" width="2.800" height="2.700" fill="#8d95a3"></rect><path d="M11 3.500 V1.800" stroke="#b0b0b0" stroke-width=".8"></path><circle cx="11" cy="1.600" r=".9" fill="#e23a3a"></circle></svg><div class="abs cb" style="left:275px;top:512px"></div><div class="abs tl" style="left:289px;top:513px"><span style="letter-spacing: -0.31px;">Owner of Vessel (Bus)</span></div>
<div class="abs dh" style="left:246px;top:536px;width:11px"></div><svg class="abs" style="left:258px;top:528px" width="16" height="16" viewBox="0 0 16 16"><g transform="translate(-2.500,-0.500) scale(.8)"><circle cx="8" cy="3.200" r="1.400" fill="#f4f4f4" stroke="#b4b4b4" stroke-width="1"></circle><path d="M8 4.600 V13.500 M5.600 6.800 h4.800" stroke="#b0b0b0" stroke-width="1.500" fill="none"></path><path d="M2.800 9.800 C3.500 12.800 6 13.800 8 13.800 C10 13.800 12.500 12.800 13.200 9.800" fill="none" stroke="#bcbcbc" stroke-width="1.600"></path><path d="M1.800 11 l.9 -2.800 l2.200 1.900z M14.200 11 l-.9 -2.800 l-2.200 1.900z" fill="#bcbcbc"></path></g><g transform="translate(3.200,2.400) scale(.86)"><g transform="translate(0,0)"><path d="M3 13.600 C2.800 10.300 5 9.200 8 9.200 C11 9.200 13.200 10.300 13 13.600 C10.500 15 5.500 15 3 13.600Z" fill="#3f93ec" stroke="#2a74cc" stroke-width=".6"></path><path d="M5.500 9.600 C7 10.800 9 10.800 10.500 9.600" stroke="#9cc8f8" stroke-width=".8" fill="none"></path><circle cx="2.900" cy="13.400" r="1" fill="#f2a648"></circle><circle cx="13.100" cy="13.400" r="1" fill="#f2a648"></circle><circle cx="8" cy="6.200" r="3.300" fill="#f8d3a8" stroke="#cf9558" stroke-width=".5"></circle><path d="M4.600 6 C4.300 3 6 2 8 2 C10.200 2 11.700 3 11.400 6 C10.500 4.600 9 4.200 7.200 4.500 C6 4.700 5.100 5.200 4.600 6Z" fill="#8a4513"></path></g></g></svg><div class="abs cb" style="left:275px;top:530px"></div><div class="abs tl" style="left:289px;top:531px"><span style="letter-spacing: -0.2px;">Owner of Vessel (Ind)</span></div>
<div class="abs dh" style="left:251px;top:554px;width:6px"></div><svg class="abs" style="left:258px;top:546px" width="16" height="16" viewBox="0 0 16 16"><path d="M10.800 2.200 L12.600 2.700 L10.800 14.500 L9 14Z" fill="#dba868" stroke="#b5803a" stroke-width=".6"></path><path d="M1.600 4.200 C4.500 2.400 7 5 11.200 2.800 L10.200 9.600 C7 11.800 4.500 9.200 1.600 11 C3 8.800 3 6.400 1.600 4.200Z" fill="#f9c08a" stroke="#ee9a4a" stroke-width=".9"></path><path d="M4 5 C5.500 5.500 7 6 9 5" stroke="#fde2c4" stroke-width="1" fill="none"></path></svg><div class="abs cb" style="left:275px;top:548px"></div><div class="abs tl" style="left:289px;top:549px"><b style="letter-spacing: 0.06px;">Foreign Vessel Flag</b></div>
<div class="abs dh" style="left:264px;top:572px;width:11px"></div><svg class="abs" style="left:276px;top:564px" width="16" height="16" viewBox="0 0 16 16"><g transform="translate(3,-1)"><path d="M10.800 2.200 L12.600 2.700 L10.800 14.500 L9 14Z" fill="#dba868" stroke="#b5803a" stroke-width=".6"></path><path d="M1.600 4.200 C4.500 2.400 7 5 11.200 2.800 L10.200 9.600 C7 11.800 4.500 9.200 1.600 11 C3 8.800 3 6.400 1.600 4.200Z" fill="#f9c08a" stroke="#ee9a4a" stroke-width=".9"></path><path d="M4 5 C5.500 5.500 7 6 9 5" stroke="#fde2c4" stroke-width="1" fill="none"></path></g><g transform="translate(-0.500,4.500) scale(.74)"><g transform="translate(0,0)"><path d="M3 13.600 C2.800 10.300 5 9.200 8 9.200 C11 9.200 13.200 10.300 13 13.600 C10.500 15 5.500 15 3 13.600Z" fill="#3f93ec" stroke="#2a74cc" stroke-width=".6"></path><path d="M5.500 9.600 C7 10.800 9 10.800 10.500 9.600" stroke="#9cc8f8" stroke-width=".8" fill="none"></path><circle cx="2.900" cy="13.400" r="1" fill="#f2a648"></circle><circle cx="13.100" cy="13.400" r="1" fill="#f2a648"></circle><circle cx="8" cy="6.200" r="3.300" fill="#f8d3a8" stroke="#cf9558" stroke-width=".5"></circle><path d="M4.600 6 C4.300 3 6 2 8 2 C10.200 2 11.700 3 11.400 6 C10.500 4.600 9 4.200 7.200 4.500 C6 4.700 5.100 5.200 4.600 6Z" fill="#3a4a88"></path></g></g></svg><div class="abs cb" style="left:293px;top:566px"></div><div class="abs tl" style="left:307px;top:567px"><span style="letter-spacing: -0.42px;">Foreign Vessel Owner</span></div>
<div class="abs dh" style="left:264px;top:590px;width:11px"></div><svg class="abs" style="left:276px;top:582px" width="16" height="16" viewBox="0 0 16 16"><g transform="translate(3,-1)"><path d="M10.800 2.200 L12.600 2.700 L10.800 14.500 L9 14Z" fill="#dba868" stroke="#b5803a" stroke-width=".6"></path><path d="M1.600 4.200 C4.500 2.400 7 5 11.200 2.800 L10.200 9.600 C7 11.800 4.500 9.200 1.600 11 C3 8.800 3 6.400 1.600 4.200Z" fill="#f9c08a" stroke="#ee9a4a" stroke-width=".9"></path><path d="M4 5 C5.500 5.500 7 6 9 5" stroke="#fde2c4" stroke-width="1" fill="none"></path></g><g transform="translate(-0.500,4.500) scale(.74)"><g transform="translate(0,0)"><path d="M3 13.600 C2.800 10.300 5 9.200 8 9.200 C11 9.200 13.200 10.300 13 13.600 C10.500 15 5.500 15 3 13.600Z" fill="#3f93ec" stroke="#2a74cc" stroke-width=".6"></path><path d="M5.500 9.600 C7 10.800 9 10.800 10.500 9.600" stroke="#9cc8f8" stroke-width=".8" fill="none"></path><circle cx="2.900" cy="13.400" r="1" fill="#f2a648"></circle><circle cx="13.100" cy="13.400" r="1" fill="#f2a648"></circle><circle cx="8" cy="6.200" r="3.300" fill="#f8d3a8" stroke="#cf9558" stroke-width=".5"></circle><path d="M4.600 6 C4.300 3 6 2 8 2 C10.200 2 11.700 3 11.400 6 C10.500 4.600 9 4.200 7.200 4.500 C6 4.700 5.100 5.200 4.600 6Z" fill="#3a4a88"></path></g></g></svg><div class="abs cb" style="left:293px;top:584px"></div><div class="abs tl" style="left:307px;top:585px"><span style="letter-spacing: -0.41px;">Foreign Vessel Operator</span></div>
<div class="abs dh" style="left:246px;top:608px;width:11px"></div><svg class="abs" style="left:258px;top:600px" width="16" height="16" viewBox="0 0 16 16"><g transform="translate(0,0)"><path d="M3 13.600 C2.800 10.300 5 9.200 8 9.200 C11 9.200 13.200 10.300 13 13.600 C10.500 15 5.500 15 3 13.600Z" fill="#3f93ec" stroke="#2a74cc" stroke-width=".6"></path><path d="M5.500 9.600 C7 10.800 9 10.800 10.500 9.600" stroke="#9cc8f8" stroke-width=".8" fill="none"></path><circle cx="2.900" cy="13.400" r="1" fill="#f2a648"></circle><circle cx="13.100" cy="13.400" r="1" fill="#f2a648"></circle><circle cx="8" cy="6.200" r="3.300" fill="#f8d3a8" stroke="#cf9558" stroke-width=".5"></circle><path d="M4.600 6 C4.300 3 6 2 8 2 C10.200 2 11.700 3 11.400 6 C10.500 4.600 9 4.200 7.200 4.500 C6 4.700 5.100 5.200 4.600 6Z" fill="#26377a"></path></g><path d="M4.300 4.500 C4.600 1.600 11.400 1.600 11.700 4.500 C9.500 3.600 6.500 3.600 4.300 4.500Z" fill="#223478"></path><path d="M4.200 4.900 C6.500 4 9.500 4 11.800 4.900" stroke="#eef0fa" stroke-width=".9" fill="none"></path><circle cx="8" cy="3" r=".7" fill="#f2d04a"></circle></svg><div class="abs cb" style="left:275px;top:602px"></div><div class="abs tl" style="left:289px;top:603px"><span style="letter-spacing: -0.22px;">Operator of Vessel (Ind)</span></div>
<div class="abs dh" style="left:251px;top:626px;width:6px"></div><svg class="abs" style="left:258px;top:618px" width="16" height="16" viewBox="0 0 16 16"><path d="M1 15.300 H15" stroke="#9a9a9a" stroke-width=".7"></path><path d="M1.300 15 L3 11.200 L4.700 15Z M11.300 15 L13 11.200 L14.700 15Z" fill="#5aba48"></path><rect x="4" y="3.500" width="8" height="11.500" fill="#f1f3f7" stroke="#b9c0cc" stroke-width=".9"></rect><path d="M5.400 5.500 h5.200 M5.400 7.500 h5.200 M5.400 9.500 h5.200 M5.400 11.300 h5.200" stroke="#86aee8" stroke-width="1.100"></path><rect x="6.600" y="12.300" width="2.800" height="2.700" fill="#8d95a3"></rect><path d="M11 3.500 V1.800" stroke="#b0b0b0" stroke-width=".8"></path><circle cx="11" cy="1.600" r=".9" fill="#e23a3a"></circle></svg><div class="abs cb" style="left:275px;top:620px"></div><div class="abs tl" style="left:289px;top:621px"><b style="letter-spacing: 0.11px;">Operator of Vessel (Bus)</b></div>
<div class="abs dh" style="left:264px;top:644px;width:11px"></div><svg class="abs" style="left:276px;top:636px" width="16" height="16" viewBox="0 0 16 16"><g transform="translate(-1.500,0.500) scale(.82)"><path d="M1 15.300 H15" stroke="#9a9a9a" stroke-width=".7"></path><path d="M1.300 15 L3 11.200 L4.700 15Z M11.300 15 L13 11.200 L14.700 15Z" fill="#5aba48"></path><rect x="4" y="3.500" width="8" height="11.500" fill="#f1f3f7" stroke="#b9c0cc" stroke-width=".9"></rect><path d="M5.400 5.500 h5.200 M5.400 7.500 h5.200 M5.400 9.500 h5.200 M5.400 11.300 h5.200" stroke="#86aee8" stroke-width="1.100"></path><rect x="6.600" y="12.300" width="2.800" height="2.700" fill="#8d95a3"></rect><path d="M11 3.500 V1.800" stroke="#b0b0b0" stroke-width=".8"></path><circle cx="11" cy="1.600" r=".9" fill="#e23a3a"></circle></g><g transform="translate(3.200,2.400) scale(.86)"><g transform="translate(0,0)"><path d="M3 13.600 C2.800 10.300 5 9.200 8 9.200 C11 9.200 13.200 10.300 13 13.600 C10.500 15 5.500 15 3 13.600Z" fill="#3f93ec" stroke="#2a74cc" stroke-width=".6"></path><path d="M5.500 9.600 C7 10.800 9 10.800 10.500 9.600" stroke="#9cc8f8" stroke-width=".8" fill="none"></path><circle cx="2.900" cy="13.400" r="1" fill="#f2a648"></circle><circle cx="13.100" cy="13.400" r="1" fill="#f2a648"></circle><circle cx="8" cy="6.200" r="3.300" fill="#f8d3a8" stroke="#cf9558" stroke-width=".5"></circle><path d="M4.600 6 C4.300 3 6 2 8 2 C10.200 2 11.700 3 11.400 6 C10.500 4.600 9 4.200 7.200 4.500 C6 4.700 5.100 5.200 4.600 6Z" fill="#8a4513"></path></g></g></svg><div class="abs cb" style="left:293px;top:638px"></div><div class="abs tl" style="left:307px;top:639px"><span style="letter-spacing: -0.29px;">Owner of Business (Ind)</span></div>
<div class="abs dh" style="left:246px;top:662px;width:11px"></div><svg class="abs" style="left:258px;top:654px" width="16" height="16" viewBox="0 0 16 16"><g transform="translate(4.500,-0.500) scale(.62)"><g transform="translate(0,0)"><path d="M3 13.600 C2.800 10.300 5 9.200 8 9.200 C11 9.200 13.200 10.300 13 13.600 C10.500 15 5.500 15 3 13.600Z" fill="#3f93ec" stroke="#2a74cc" stroke-width=".6"></path><path d="M5.500 9.600 C7 10.800 9 10.800 10.500 9.600" stroke="#9cc8f8" stroke-width=".8" fill="none"></path><circle cx="2.900" cy="13.400" r="1" fill="#f2a648"></circle><circle cx="13.100" cy="13.400" r="1" fill="#f2a648"></circle><circle cx="8" cy="6.200" r="3.300" fill="#f8d3a8" stroke="#cf9558" stroke-width=".5"></circle><path d="M4.600 6 C4.300 3 6 2 8 2 C10.200 2 11.700 3 11.400 6 C10.500 4.600 9 4.200 7.200 4.500 C6 4.700 5.100 5.200 4.600 6Z" fill="#8a4513"></path></g></g><path d="M1 6.800 h4.500 l1.400 1.400 h8 v6.300 h-13.900z" fill="#f8d978" stroke="#dcaa2a" stroke-width=".9"></path><path d="M2.500 10.500 h10.500 M2.500 12.300 h10.500" stroke="#fff4c0" stroke-width="1"></path></svg><div class="abs cb" style="left:275px;top:656px"></div><div class="abs tl" style="left:289px;top:657px"><span style="letter-spacing: -0.62px;">Sanction</span></div>
<div class="abs dh" style="left:246px;top:680px;width:11px"></div><svg class="abs" style="left:258px;top:672px" width="16" height="16" viewBox="0 0 16 16"><path d="M1.500 3 C4 2 6 3.500 7.600 5.200 C10 6.800 12 9.500 12.800 12 C13.200 13.300 14.400 14 14.800 15 C13 15 12.200 14.500 11.800 13.300 C10.500 12 8.300 11 7 9.200 C5.600 7.300 4.600 5 1.500 3Z" fill="#1a1a1a"></path><path d="M7.800 5 L10.800 2 L10 6.300Z" fill="#1a1a1a"></path><path d="M4.500 5.600 C5.500 6.600 6.300 8.300 7.300 9.600" stroke="#fff" stroke-width="1.100" fill="none"></path><path d="M11.600 12.800 l-2.800 2.200 l3.300 -.4z" fill="#1a1a1a"></path></svg><div class="abs cb" style="left:275px;top:674px"></div><div class="abs tl" style="left:289px;top:675px"><span style="letter-spacing: -0.46px;">Marine Mammal Safety</span></div>
<div class="abs dh" style="left:228px;top:698px;width:11px"></div><svg class="abs" style="left:240px;top:690px" width="16" height="16" viewBox="0 0 16 16"><g transform="translate(8,8)"><circle r="6.8" fill="#13207e"></circle><path d="M-6.66 -1.02 C-4.08 -2.04 -1.7 0.68 0 2.86 C2.04 0.68 4.08 -2.38 6.46 -2.04 A6.8 6.8 0 1 1 -6.66 -1.02Z" fill="#1ea6ea"></path><path d="M-6.53 -2.04 C-3.74 -3.06 -1.36 -0.34 0 1.7 C2.04 -1.02 4.08 -3.74 6.26 -3.06 C4.08 -2.04 2.04 0.82 0 3.54 C-1.7 1.22 -4.08 -1.36 -6.73 -0.54Z" fill="#fff"></path></g></svg><div class="abs cb" style="left:257px;top:692px"></div><div class="abs tl" style="left:271px;top:693px"><span style="letter-spacing: -0.4px;">For Office Use Only</span></div>
<div class="abs dh" style="left:228px;top:716px;width:11px"></div><svg class="abs" style="left:240px;top:708px" width="16" height="16" viewBox="0 0 16 16"><path d="M3.500 2.500 h7 l3 3 v10" fill="none" stroke="#ececec" stroke-width="1"></path><path d="M2.500 1.500 h7.500 l3 3 v10 h-10.500z" fill="#fff" stroke="#d6d6d6" stroke-width="1"></path><path d="M10 1.500 v3 h3" fill="#f4f4f4" stroke="#d2d2d2" stroke-width=".8"></path><path d="M4.500 5.500 h4 M4.500 7.500 h6.500 M4.500 9.500 h6.500 M4.500 11.500 h6.500 M4.500 13.200 h6.500" stroke="#c6c6c6" stroke-width="1"></path></svg><div class="abs cb" style="left:257px;top:710px"></div><div class="abs tl" style="left:271px;top:711px"><span style="letter-spacing: -0.5px;">Authorized Gear</span></div>
<div class="abs dh" style="left:233px;top:734px;width:6px"></div><svg class="abs" style="left:240px;top:726px" width="16" height="16" viewBox="0 0 16 16"><path d="M3.500 2.500 h7 l3 3 v10" fill="none" stroke="#ececec" stroke-width="1"></path><path d="M2.500 1.500 h7.500 l3 3 v10 h-10.500z" fill="#fff" stroke="#d6d6d6" stroke-width="1"></path><path d="M10 1.500 v3 h3" fill="#f4f4f4" stroke="#d2d2d2" stroke-width=".8"></path><path d="M4.500 5.500 h4 M4.500 7.500 h6.500 M4.500 9.500 h6.500 M4.500 11.500 h6.500 M4.500 13.200 h6.500" stroke="#c6c6c6" stroke-width="1"></path></svg><div class="abs cb" style="left:257px;top:728px"></div><div class="abs tl" style="left:271px;top:729px"><b style="letter-spacing: -0.1px;">Vessel Processor</b></div>
<div class="abs dh" style="left:246px;top:752px;width:11px"></div><svg class="abs" style="left:258px;top:744px" width="16" height="16" viewBox="0 0 16 16"><path d="M1 15.300 H15" stroke="#9a9a9a" stroke-width=".7"></path><path d="M1.300 15 L3 11.200 L4.700 15Z M11.300 15 L13 11.200 L14.700 15Z" fill="#5aba48"></path><rect x="4" y="3.500" width="8" height="11.500" fill="#f1f3f7" stroke="#b9c0cc" stroke-width=".9"></rect><path d="M5.400 5.500 h5.200 M5.400 7.500 h5.200 M5.400 9.500 h5.200 M5.400 11.300 h5.200" stroke="#86aee8" stroke-width="1.100"></path><rect x="6.600" y="12.300" width="2.800" height="2.700" fill="#8d95a3"></rect><path d="M11 3.500 V1.800" stroke="#b0b0b0" stroke-width=".8"></path><circle cx="11" cy="1.600" r=".9" fill="#e23a3a"></circle></svg><div class="abs cb" style="left:275px;top:746px"></div><div class="abs tl" style="left:289px;top:747px"><span style="letter-spacing: -0.31px;">Owner of Vessel (Bus)</span></div>
<div class="abs dh" style="left:246px;top:770px;width:11px"></div><svg class="abs" style="left:258px;top:762px" width="16" height="16" viewBox="0 0 16 16"><g transform="translate(-2.500,-0.500) scale(.8)"><circle cx="8" cy="3.200" r="1.400" fill="#f4f4f4" stroke="#b4b4b4" stroke-width="1"></circle><path d="M8 4.600 V13.500 M5.600 6.800 h4.800" stroke="#b0b0b0" stroke-width="1.500" fill="none"></path><path d="M2.800 9.800 C3.500 12.800 6 13.800 8 13.800 C10 13.800 12.500 12.800 13.200 9.800" fill="none" stroke="#bcbcbc" stroke-width="1.600"></path><path d="M1.800 11 l.9 -2.800 l2.200 1.900z M14.200 11 l-.9 -2.800 l-2.200 1.900z" fill="#bcbcbc"></path></g><g transform="translate(3.200,2.400) scale(.86)"><g transform="translate(0,0)"><path d="M3 13.600 C2.800 10.300 5 9.200 8 9.200 C11 9.200 13.200 10.300 13 13.600 C10.500 15 5.500 15 3 13.600Z" fill="#3f93ec" stroke="#2a74cc" stroke-width=".6"></path><path d="M5.500 9.600 C7 10.800 9 10.800 10.500 9.600" stroke="#9cc8f8" stroke-width=".8" fill="none"></path><circle cx="2.900" cy="13.400" r="1" fill="#f2a648"></circle><circle cx="13.100" cy="13.400" r="1" fill="#f2a648"></circle><circle cx="8" cy="6.200" r="3.300" fill="#f8d3a8" stroke="#cf9558" stroke-width=".5"></circle><path d="M4.600 6 C4.300 3 6 2 8 2 C10.200 2 11.700 3 11.400 6 C10.500 4.600 9 4.200 7.200 4.500 C6 4.700 5.100 5.200 4.600 6Z" fill="#8a4513"></path></g></g></svg><div class="abs cb" style="left:275px;top:764px"></div><div class="abs tl" style="left:289px;top:765px"><span style="letter-spacing: -0.2px;">Owner of Vessel (Ind)</span></div>
<div class="abs dh" style="left:228px;top:788px;width:11px"></div><svg class="abs" style="left:240px;top:780px" width="16" height="16" viewBox="0 0 16 16"><g transform="translate(0,0)"><path d="M3 13.600 C2.800 10.300 5 9.200 8 9.200 C11 9.200 13.200 10.300 13 13.600 C10.500 15 5.500 15 3 13.600Z" fill="#3f93ec" stroke="#2a74cc" stroke-width=".6"></path><path d="M5.500 9.600 C7 10.800 9 10.800 10.500 9.600" stroke="#9cc8f8" stroke-width=".8" fill="none"></path><circle cx="2.900" cy="13.400" r="1" fill="#f2a648"></circle><circle cx="13.100" cy="13.400" r="1" fill="#f2a648"></circle><circle cx="8" cy="6.200" r="3.300" fill="#f8d3a8" stroke="#cf9558" stroke-width=".5"></circle><path d="M4.600 6 C4.300 3 6 2 8 2 C10.200 2 11.700 3 11.400 6 C10.500 4.600 9 4.200 7.200 4.500 C6 4.700 5.100 5.200 4.600 6Z" fill="#26377a"></path></g><path d="M4.300 4.500 C4.600 1.600 11.400 1.600 11.700 4.500 C9.500 3.600 6.500 3.600 4.300 4.500Z" fill="#223478"></path><path d="M4.200 4.900 C6.500 4 9.500 4 11.800 4.900" stroke="#eef0fa" stroke-width=".9" fill="none"></path><circle cx="8" cy="3" r=".7" fill="#f2d04a"></circle></svg><div class="abs cb" style="left:257px;top:782px"></div><div class="abs tl" style="left:271px;top:783px"><span style="letter-spacing: -0.41px;">Captain Of Vessel</span></div>
<div class="abs dh" style="left:228px;top:806px;width:11px"></div><svg class="abs" style="left:240px;top:798px" width="16" height="16" viewBox="0 0 16 16"><g transform="translate(0,0)"><path d="M3 13.600 C2.800 10.300 5 9.200 8 9.200 C11 9.200 13.200 10.300 13 13.600 C10.500 15 5.500 15 3 13.600Z" fill="#3f93ec" stroke="#2a74cc" stroke-width=".6"></path><path d="M5.500 9.600 C7 10.800 9 10.800 10.500 9.600" stroke="#9cc8f8" stroke-width=".8" fill="none"></path><circle cx="2.900" cy="13.400" r="1" fill="#f2a648"></circle><circle cx="13.100" cy="13.400" r="1" fill="#f2a648"></circle><circle cx="8" cy="6.200" r="3.300" fill="#f8d3a8" stroke="#cf9558" stroke-width=".5"></circle><path d="M4.600 6 C4.300 3 6 2 8 2 C10.200 2 11.700 3 11.400 6 C10.500 4.600 9 4.200 7.200 4.500 C6 4.700 5.100 5.200 4.600 6Z" fill="#8a4513"></path></g></svg><div class="abs cb" style="left:257px;top:800px"><svg width="8" height="8" viewBox="0 0 8 8"><path d="M1.300 4.100 L3.200 6.300 L6.800 1.200" fill="none" stroke="#3a3a3a" stroke-width="1.600"></path></svg></div><div class="abs tl" style="left:271px;top:801px"><span style="letter-spacing: -0.38px;">Applicant Of Permit</span></div>
<div class="abs dv" style="left:227px;top:293px;height:513px"></div><div class="abs dv" style="left:245px;top:310px;height:28px"></div><div class="abs dv" style="left:245px;top:364px;height:10px"></div><div class="abs dv" style="left:245px;top:436px;height:10px"></div><div class="abs dv" style="left:245px;top:508px;height:172px"></div><div class="abs dv" style="left:263px;top:562px;height:28px"></div><div class="abs dv" style="left:263px;top:634px;height:10px"></div><div class="abs dv" style="left:245px;top:742px;height:28px"></div><div class="abs exp" style="left:223px;top:297px"><i></i></div><div class="abs exp" style="left:223px;top:351px"><i></i></div><div class="abs exp" style="left:223px;top:423px"><i></i></div><div class="abs exp" style="left:223px;top:495px"><i></i></div><div class="abs exp" style="left:241px;top:549px"><i></i></div><div class="abs exp" style="left:241px;top:621px"><i></i></div><div class="abs exp" style="left:223px;top:729px"><i></i></div>
<div class="abs" style="left:446px;top:277px;width:1128px;height:435px;background:#e1ecf7"></div>
<div class="abs" style="left:458px;top:291px;font-size:12px;line-height:14px;white-space:nowrap"><span style="">SECTION:</span></div><div class="abs" style="left:520px;top:291px;font-size:12px;line-height:14px;font-weight:bold;white-space:nowrap"><span style="letter-spacing: -0.32px;">Business Extended Attributes</span></div>
<div class="abs t10" style="left:1421px;top:291px;font-size:9.500px"><span style="letter-spacing: 0.17px;">Display sequence:</span></div>
<div class="abs" style="left:1514px;top:289px;width:48px;height:16px;border:1px solid #a2a2a2;background:#f6f6f6"><span class="abs t10" style="left:4px;top:1px;font-size:9.500px">2.13</span><svg class="abs" style="left:34.500px;top:4.500px" width="7" height="6" viewBox="0 0 7 6"><path d="M0.400 0.300 H6.600 L3.500 5.800Z" fill="#111"></path></svg></div>
<div class="abs" style="left:453px;top:314px;width:1114px;height:276px;background:#fff;border:1px solid #a9a9a9"></div>
<div class="abs t10" style="left:457px;top:318px"><b style="letter-spacing: -0.13px;">Section Title:</b></div><div class="abs t9" style="left:534px;top:319px"><span style="letter-spacing: 0.13px;">(max 500 chars)</span></div>
<div class="abs ta" style="left:457px;top:330px;width:1106px;height:28px"></div><div class="abs t10" style="left:460px;top:333.500px"><span style="letter-spacing: 0.15px;">ADDITIONAL FACILITIES</span></div>
<div class="abs t10" style="left:457px;top:361px"><b style="letter-spacing: 0.21px;">Instructions/Remarks:</b></div><div class="abs t9" style="left:590px;top:362px"><span style="letter-spacing: 0.14px;">(max 4000 chars)</span></div>
<div class="abs ta" style="left:457px;top:373px;width:1106px;height:52px"></div><div class="abs t10" style="left:460px;top:376px;font-size:9.500px"><span style="letter-spacing: 0.09px;">Enter the requested information.</span></div>
<svg class="abs" style="left:1554px;top:349px" width="8" height="8" viewBox="0 0 8 8"><path d="M7.500 0.500 L0.500 7.500 M7.500 4.500 L4.500 7.500" stroke="#6a6a6a" stroke-width="1"></path></svg><svg class="abs" style="left:1554px;top:416px" width="8" height="8" viewBox="0 0 8 8"><path d="M7.500 0.500 L0.500 7.500 M7.500 4.500 L4.500 7.500" stroke="#6a6a6a" stroke-width="1"></path></svg>
<div class="abs cb" style="left:462px;top:432px"><svg width="8" height="8" viewBox="0 0 8 8"><path d="M1.300 4.100 L3.200 6.300 L6.800 1.200" fill="none" stroke="#3a3a3a" stroke-width="1.600"></path></svg></div><div class="abs t9" style="left:482px;top:430px;font-size:9.500px"><span style="letter-spacing: 0.16px;">Repeating Section: Check if the applicant can provide multiple entries of this section (ex. multiple owners)</span></div>
<div class="abs cb" style="left:462px;top:451px"><svg width="8" height="8" viewBox="0 0 8 8"><path d="M1.300 4.100 L3.200 6.300 L6.800 1.200" fill="none" stroke="#3a3a3a" stroke-width="1.600"></path></svg></div><div class="abs t9" style="left:482px;top:448px;font-size:9.500px"><span style="letter-spacing: 0.14px;">Conditional Section: Check if certain conditions must be met for this section to be displayed</span></div>
<div class="abs ta" style="left:482px;top:469px;width:1081px;height:119px;border-color:#ababab"></div><div class="abs" style="left:486px;top:472px;width:1075px;height:18px;background:#fff;border-bottom:1px solid #d6d6d6"></div>
<div class="abs t9" style="left:490px;top:476px;font-size:9.500px"><span style="letter-spacing: 0.13px;">This section (Business Extended Attributes) will be displayed if answers provided by the applicant match the answers to the questions defined below:</span></div>
<div class="abs t9 teal" style="left:490px;top:493px;font-size:9.500px">Q:</div><div class="abs t9" style="left:509px;top:493px;font-size:9.500px"><span style="letter-spacing: 0.14px;">Is the applicant a(n):</span></div>
<div class="abs t9 teal" style="left:490px;top:509px;font-size:9.500px">A:</div><div class="abs cb" style="left:513px;top:512px"><svg width="8" height="8" viewBox="0 0 8 8"><path d="M1.300 4.100 L3.200 6.300 L6.800 1.200" fill="none" stroke="#3a3a3a" stroke-width="1.600"></path></svg></div><div class="abs t9" style="left:534px;top:509px;font-size:9.500px"><span style="letter-spacing: 0.14px;">Business based in the United States</span></div><div class="abs cb" style="left:513px;top:532px"></div><div class="abs t9" style="left:534px;top:529px;font-size:9.500px"><span style="letter-spacing: 0.1px;">Business based in a foreign nation</span></div><div class="abs cb" style="left:513px;top:552px"></div><div class="abs t9" style="left:534px;top:549px;font-size:9.500px"><span style="letter-spacing: 0.17px;">Individual based in the United States</span></div><div class="abs cb" style="left:513px;top:572px"></div><div class="abs t9" style="left:534px;top:569px;font-size:9.500px"><span style="letter-spacing: 0.14px;">Individual based in a foreign nation</span></div>
<div class="abs" style="left:453px;top:598px;width:1114px;height:113px;background:#fff;border:1px solid #a9a9a9"></div><div class="abs" style="left:454px;top:599px;width:1112px;height:27px;background:#e9e9e9"></div>
<div class="abs" style="left:454px;top:626px;width:1112px;height:1px;background:#a9a9a9"></div><div class="abs" style="left:454px;top:647px;width:1112px;height:1px;background:#a9a9a9"></div><div class="abs" style="left:454px;top:668px;width:1112px;height:1px;background:#a9a9a9"></div><div class="abs" style="left:454px;top:689px;width:1112px;height:1px;background:#a9a9a9"></div><div class="abs" style="left:1379px;top:599px;width:1px;height:111px;background:#a9a9a9"></div><div class="abs" style="left:1409px;top:599px;width:1px;height:111px;background:#a9a9a9"></div><div class="abs" style="left:1435px;top:599px;width:1px;height:111px;background:#a9a9a9"></div><div class="abs" style="left:1461px;top:599px;width:1px;height:111px;background:#a9a9a9"></div><div class="abs" style="left:1487px;top:599px;width:1px;height:111px;background:#a9a9a9"></div><div class="abs" style="left:1528px;top:599px;width:1px;height:111px;background:#a9a9a9"></div>
<div class="abs t10" style="left:457px;top:613px"><b style="letter-spacing: -0.16px;">Section Fields</b></div>
<div class="abs hd" style="left:1380px;top:616px;width:30px">Type</div><div class="abs hd" style="left:1410px;top:616px;width:26px">Incl</div><svg class="abs" style="left:1417px;top:603px" width="12" height="12" viewBox="0 0 12 12"><circle cx="6" cy="6" r="5.300" fill="#d9d9d9" stroke="#bdbdbd" stroke-width=".9" stroke-dasharray="1.500 .8"></circle><circle cx="6" cy="6" r="4" fill="#a9a9a9"></circle><text x="6" y="8.600" font-family="Liberation Sans, sans-serif" font-size="7.500" font-weight="bold" fill="#f4f4f4" text-anchor="middle">?</text></svg><div class="abs hd" style="left:1436px;top:616px;width:26px">Req</div><svg class="abs" style="left:1443px;top:603px" width="12" height="12" viewBox="0 0 12 12"><circle cx="6" cy="6" r="5.300" fill="#d9d9d9" stroke="#bdbdbd" stroke-width=".9" stroke-dasharray="1.500 .8"></circle><circle cx="6" cy="6" r="4" fill="#a9a9a9"></circle><text x="6" y="8.600" font-family="Liberation Sans, sans-serif" font-size="7.500" font-weight="bold" fill="#f4f4f4" text-anchor="middle">?</text></svg><div class="abs hd" style="left:1462px;top:616px;width:26px">R/O</div><svg class="abs" style="left:1469px;top:603px" width="12" height="12" viewBox="0 0 12 12"><circle cx="6" cy="6" r="5.300" fill="#d9d9d9" stroke="#bdbdbd" stroke-width=".9" stroke-dasharray="1.500 .8"></circle><circle cx="6" cy="6" r="4" fill="#a9a9a9"></circle><text x="6" y="8.600" font-family="Liberation Sans, sans-serif" font-size="7.500" font-weight="bold" fill="#f4f4f4" text-anchor="middle">?</text></svg><div class="abs hd" style="left:1488px;top:616px;width:41px">Seq</div><svg class="abs" style="left:1502px;top:603px" width="12" height="12" viewBox="0 0 12 12"><circle cx="6" cy="6" r="5.300" fill="#d9d9d9" stroke="#bdbdbd" stroke-width=".9" stroke-dasharray="1.500 .8"></circle><circle cx="6" cy="6" r="4" fill="#a9a9a9"></circle><text x="6" y="8.600" font-family="Liberation Sans, sans-serif" font-size="7.500" font-weight="bold" fill="#f4f4f4" text-anchor="middle">?</text></svg><div class="abs hd" style="left:1529px;top:616px;width:38px;color:#1a1a7e">More...</div>
<div class="abs t10" style="left:457px;top:632px"><span style="letter-spacing: 0.08px;">PURCHASED/RECEIVED LOCATION NAME</span></div><div class="abs t10" style="left:1380px;top:632px;width:29px;text-align:center">Text</div><div class="abs cb" style="left:1417px;top:632px"><svg width="8" height="8" viewBox="0 0 8 8"><path d="M1.300 4.100 L3.200 6.300 L6.800 1.200" fill="none" stroke="#3a3a3a" stroke-width="1.600"></path></svg></div><div class="abs cb" style="left:1443px;top:632px"></div><div class="abs cb" style="left:1469px;top:632px"></div><div class="abs" style="left:1490px;top:630px;width:34px;height:16px;background:#f4f4f4;border:1px solid;border-color:#7b7b7b #dcdcdc #dcdcdc #7b7b7b"><span class="abs t10" style="left:2px;top:1px">10</span></div><svg class="abs" style="left:1539px;top:630px" width="15" height="15" viewBox="0 0 15 15"><path d="M8.500 8.500 L13 13" stroke="#c9a06a" stroke-width="2.400" stroke-linecap="round"></path><circle cx="6" cy="6" r="4.300" fill="#cfe6fb" stroke="#9bb4d2" stroke-width="1.300"></circle><path d="M3.500 5.500 A2.800 2.800 0 0 1 6.500 3.200" stroke="#fff" stroke-width="1.200" fill="none"></path></svg>
<div class="abs t10" style="left:457px;top:653px"><span style="">PURCHASED/RECEIVED LOCATION TELEPHONE NUMBER</span></div><div class="abs t10" style="left:1380px;top:653px;width:29px;text-align:center">Set</div><div class="abs cb" style="left:1417px;top:653px"><svg width="8" height="8" viewBox="0 0 8 8"><path d="M1.300 4.100 L3.200 6.300 L6.800 1.200" fill="none" stroke="#3a3a3a" stroke-width="1.600"></path></svg></div><div class="abs cb" style="left:1443px;top:653px"></div><div class="abs cb" style="left:1469px;top:653px"></div><div class="abs" style="left:1490px;top:651px;width:34px;height:16px;background:#f4f4f4;border:1px solid;border-color:#7b7b7b #dcdcdc #dcdcdc #7b7b7b"><span class="abs t10" style="left:2px;top:1px">20</span></div><svg class="abs" style="left:1539px;top:651px" width="15" height="15" viewBox="0 0 15 15"><path d="M8.500 8.500 L13 13" stroke="#c9a06a" stroke-width="2.400" stroke-linecap="round"></path><circle cx="6" cy="6" r="4.300" fill="#cfe6fb" stroke="#9bb4d2" stroke-width="1.300"></circle><path d="M3.500 5.500 A2.800 2.800 0 0 1 6.500 3.200" stroke="#fff" stroke-width="1.200" fill="none"></path></svg>
<div class="abs t10" style="left:457px;top:674px"><span style="letter-spacing: 0.15px;">PURCHASED/RECEIVED LOCATION</span></div><div class="abs t10" style="left:1380px;top:674px;width:29px;text-align:center">Set</div><div class="abs cb" style="left:1417px;top:674px"><svg width="8" height="8" viewBox="0 0 8 8"><path d="M1.300 4.100 L3.200 6.300 L6.800 1.200" fill="none" stroke="#3a3a3a" stroke-width="1.600"></path></svg></div><div class="abs cb" style="left:1443px;top:674px"></div><div class="abs cb" style="left:1469px;top:674px"></div><div class="abs" style="left:1490px;top:672px;width:34px;height:16px;background:#f4f4f4;border:1px solid;border-color:#7b7b7b #dcdcdc #dcdcdc #7b7b7b"><span class="abs t10" style="left:2px;top:1px">30</span></div><svg class="abs" style="left:1539px;top:672px" width="15" height="15" viewBox="0 0 15 15"><path d="M8.500 8.500 L13 13" stroke="#c9a06a" stroke-width="2.400" stroke-linecap="round"></path><circle cx="6" cy="6" r="4.300" fill="#cfe6fb" stroke="#9bb4d2" stroke-width="1.300"></circle><path d="M3.500 5.500 A2.800 2.800 0 0 1 6.500 3.200" stroke="#fff" stroke-width="1.200" fill="none"></path></svg>
<div class="abs t10" style="left:457px;top:695px"><span style="letter-spacing: 0.09px;">PURCHASED/RECEIVED LOCATION FAX NUMBER</span></div><div class="abs t10" style="left:1380px;top:695px;width:29px;text-align:center">Set</div><div class="abs cb" style="left:1417px;top:695px"><svg width="8" height="8" viewBox="0 0 8 8"><path d="M1.300 4.100 L3.200 6.300 L6.800 1.200" fill="none" stroke="#3a3a3a" stroke-width="1.600"></path></svg></div><div class="abs cb" style="left:1443px;top:695px"></div><div class="abs cb" style="left:1469px;top:695px"></div><div class="abs" style="left:1490px;top:693px;width:34px;height:16px;background:#f4f4f4;border:1px solid;border-color:#7b7b7b #dcdcdc #dcdcdc #7b7b7b"><span class="abs t10" style="left:2px;top:1px">40</span></div><svg class="abs" style="left:1539px;top:693px" width="15" height="15" viewBox="0 0 15 15"><path d="M8.500 8.500 L13 13" stroke="#c9a06a" stroke-width="2.400" stroke-linecap="round"></path><circle cx="6" cy="6" r="4.300" fill="#cfe6fb" stroke="#9bb4d2" stroke-width="1.300"></circle><path d="M3.500 5.500 A2.800 2.800 0 0 1 6.500 3.200" stroke="#fff" stroke-width="1.200" fill="none"></path></svg>
<div class="abs btn" style="left:810px;font-weight:bold">Save</div><div class="abs btn" style="left:902px;font-size:9.500px">Cancel</div>
<!--/MAIN-->

<div class="abs" style="left:0;top:1113px;width:1600px;height:11px;background:#fbd140"></div>
<div class="abs" style="left:0;top:1124px;width:1600px;height:1px;background:#fff6d8"></div>
<div class="abs" style="left:0;top:1125px;width:1600px;height:6px;background:#1b78cc"></div>
<div class="abs fl" style="top:1133px"><u style="letter-spacing: 0.05px;">U.S. Department of Commerce</u></div>
<div class="abs fl" style="top:1143px"><u style="letter-spacing: 0.13px;">National Oceanic and Atmospheric Administration</u></div>
<div class="abs fl" style="top:1153px"><u style="">NOAA Fisheries</u></div>
<div class="abs fl" style="top:1163px"><span style="letter-spacing: 0.12px;"><u>Privacy Policy</u> <span style="color:#333">|</span> <u>Disclaimer</u> <span style="color:#333">|</span> <u>Contact Webmaster</u></span></div>
<svg class="abs" style="left:480px;top:1134px" width="36" height="36" viewBox="0 0 36 36">
  <circle cx="18" cy="17.800" r="17" fill="#1a86c6"></circle><circle cx="18" cy="17.800" r="15.300" fill="none" stroke="#9fe4f4" stroke-width="1.500" stroke-dasharray="1.400 1"></circle><circle cx="18" cy="17.800" r="13.300" fill="#fff"></circle>
  <path d="M13.800 8 L18 14.800 L22.600 8" fill="none" stroke="#8a4a12" stroke-width="1.700"></path><path d="M16.500 14.500 h3.200" stroke="#b8862a" stroke-width="1.200"></path>
  <path d="M11.200 15.200 h13.800 l-.6 1 v10 c0 1.600 -1.800 2.400 -6.300 2.400 c-4.500 0 -6.300 -.8 -6.300 -2.400 v-10z" fill="#f8c81c" stroke="#a88a2a" stroke-width=".5"></path>
  <path d="M11.200 15.200 h13.800 l-.6 1 v6 h-12.600 v-6z" fill="#1a7ad2"></path>
  <path d="M13.500 20.500 c2 -2.500 6 -3 9 -1 l-1 2 h-7z" fill="#e8f2fa"></path><path d="M12.500 22 h11.200" stroke="#1a2a4a" stroke-width=".9"></path>
  <path d="M18 22.500 v6" stroke="#a88a2a" stroke-width=".8"></path>
</svg>
<svg class="abs" style="left:1084px;top:1134px" width="36" height="36" viewBox="-18 -18 36 36"><circle r="17.02" fill="#fdfdfd"></circle><circle r="16.08" fill="none" stroke="#b4b8c8" stroke-width="1.34" stroke-dasharray="1.61 1.34"></circle><circle r="13.4" fill="#13207e"></circle><path d="M-13.13 -2.01 C-8.04 -4.02 -3.35 1.34 0 5.63 C4.02 1.34 8.04 -4.69 12.73 -4.02 A13.4 13.4 0 1 1 -13.13 -2.01Z" fill="#1ea6ea"></path><path d="M-12.86 -4.02 C-7.37 -6.03 -2.68 -0.67 0 3.35 C4.02 -2.01 8.04 -7.37 12.33 -6.03 C8.04 -4.02 4.02 1.61 0 6.97 C-3.35 2.41 -8.04 -2.68 -13.27 -1.07Z" fill="#fff"></path><text x="0" y="-5.63" font-family="Liberation Sans, sans-serif" font-size="5.63" font-weight="bold" fill="#fff" text-anchor="middle">noaa</text></svg>



</body></html>
